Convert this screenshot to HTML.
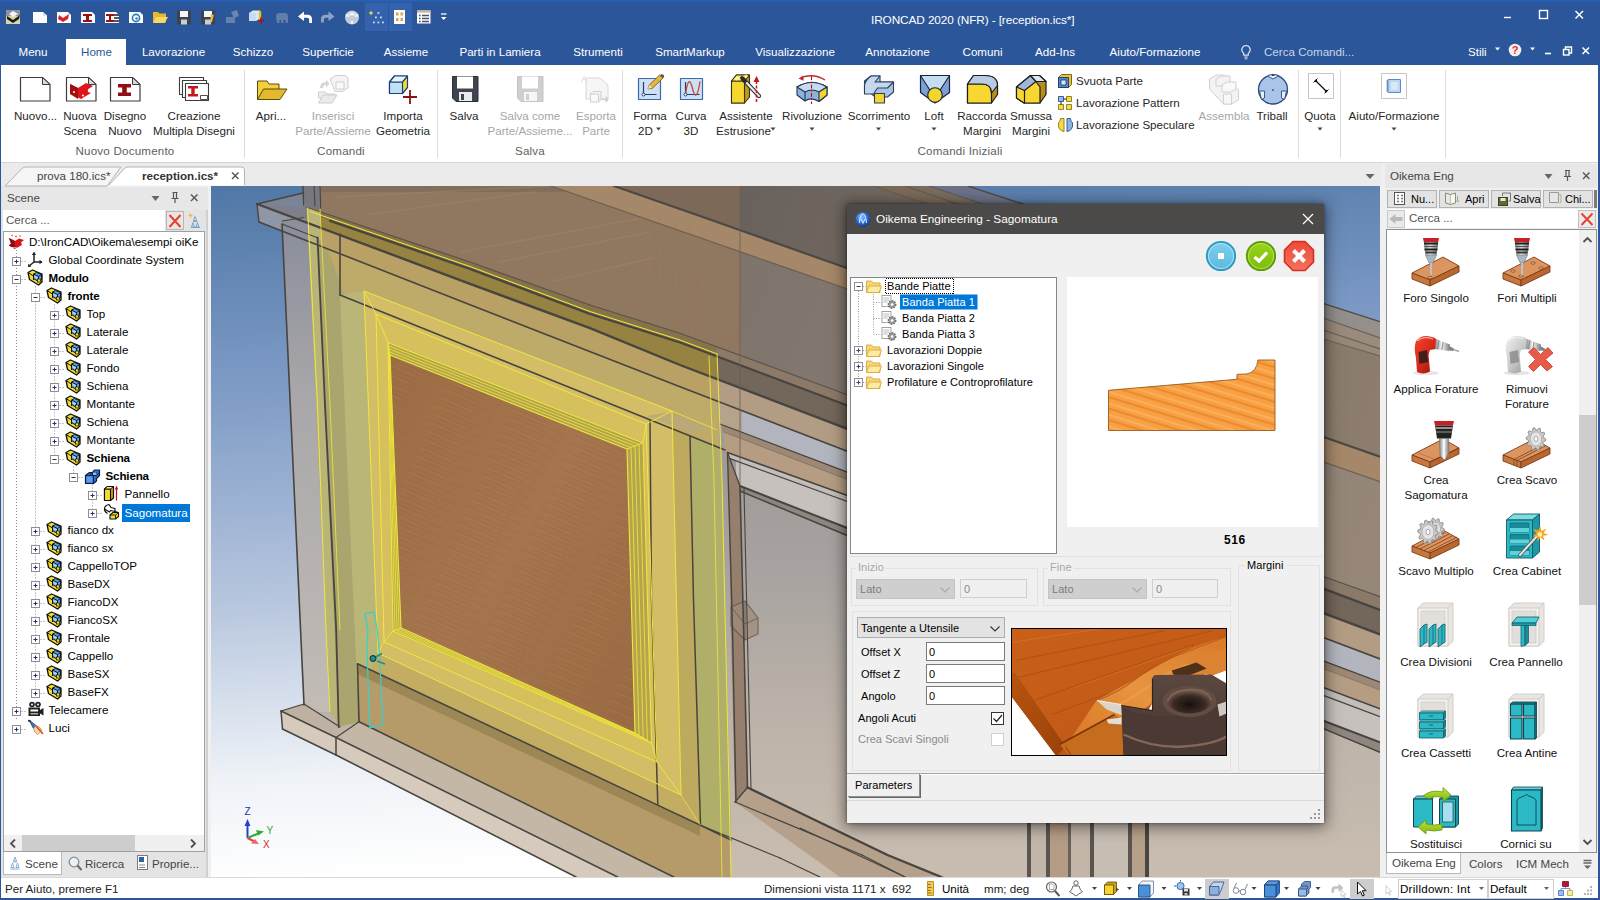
<!DOCTYPE html>
<html lang="it"><head><meta charset="utf-8"><title>IRONCAD 2020 (NFR) - [reception.ics*]</title>
<style>
*{box-sizing:border-box;margin:0;padding:0}
html,body{width:1600px;height:900px;overflow:hidden;background:#f0f0f0}
body{font-family:"Liberation Sans",sans-serif;font-size:11.6px;color:#1e1e1e;position:relative;-webkit-font-smoothing:antialiased}
.abs{position:absolute}
.t{position:absolute;white-space:nowrap;line-height:14px}
svg{position:absolute;overflow:visible}
#title{position:absolute;left:0;top:0;width:1600px;height:66px;background:#2b579a}
#ribbon{position:absolute;left:1px;top:66px;width:1598px;height:97px;background:#fff;border-bottom:1px solid #d6d6d6}
.rl{position:absolute;white-space:nowrap;text-align:center;font-size:11.6px;line-height:15px;color:#262626;transform:translateX(-50%)}
.rl.dis{color:#a6a6a6}
.grp{position:absolute;top:144px;white-space:nowrap;font-size:11.6px;letter-spacing:.2px;color:#5e5e5e;transform:translateX(-50%);line-height:14px}
.sep{position:absolute;top:70px;width:1px;height:88px;background:#dcdcdc}
.tab{position:absolute;top:44px;white-space:nowrap;color:#fff;font-size:11.6px;line-height:16px;transform:translateX(-50%)}
</style></head><body>
<div id="title"><div class="abs" style="left:0;top:0;width:1600px;height:2px;background:#2760b2"></div>
<!-- quick access toolbar -->
<svg width="460" height="36" viewBox="0 0 460 36" style="left:0;top:0">
 <!-- app icon -->
 <rect x="6" y="10" width="14" height="14" fill="#d9d6a8"/><rect x="6" y="10" width="14" height="6" fill="#8a93a0"/><path d="M7 16l6 4 7-5-1 4-6 4-6-4z" fill="#1a1a1a"/><path d="M9 14l4-3 5 3-5 3z" fill="#f4f4f4"/>
 <!-- new -->
 <path d="M33 12h10l4 3.500v7.500h-14z" fill="#fdfdfd"/><path d="M43 12v3.500h4z" fill="#cfd6e2"/>
 <!-- scene -->
 <path d="M57 12h11l3 3v8h-14z" fill="#fdfdfd"/><path d="M59 15l4 3 6-4-1 5-5 3-5-3z" fill="#d8232a"/>
 <!-- drawing -->
 <path d="M81 12h11l3 3v8h-14z" fill="#fdfdfd"/><path d="M83 14h9v2h-3v4h3v2h-9v-2h3v-4h-3z" fill="#9b1116"/>
 <!-- multi drawing -->
 <path d="M105 12h11l3 3v8h-14z" fill="#fdfdfd"/><path d="M106 14h8v2h-3v4h3v2h-8v-2h3v-4h-3z" fill="#9b1116"/><path d="M114 15h5M114 18h5M114 21h5" stroke="#222" stroke-width="1.300"/>
 <!-- 3d pdf-ish -->
 <path d="M129 12h11l3 3v8h-14z" fill="#fdfdfd"/><circle cx="136" cy="18" r="3.600" fill="none" stroke="#1e7fc0" stroke-width="1.600"/><circle cx="136.500" cy="18.500" r="1.200" fill="#1e7fc0"/>
 <!-- open -->
 <path d="M153 12h5l1.500 1.500h6.500v9h-13z" fill="#e9b82c"/><path d="M153 23l3-6h12l-3.500 6z" fill="#f8d765"/>
 <!-- save -->
 <rect x="177" y="10.500" width="14" height="14" rx="1" fill="#3d4450"/><rect x="180" y="11" width="8" height="6" fill="#f4f6f8"/><rect x="181" y="19.500" width="6" height="5" fill="#c9ced6"/>
 <!-- save as -->
 <rect x="201" y="10.500" width="14" height="14" rx="1" fill="#3d4450"/><rect x="204" y="11" width="8" height="6" fill="#f4f6f8"/><rect x="205" y="19.500" width="6" height="5" fill="#c9ced6"/><path d="M211 14l3 1-2 7-2 1z" fill="#e8b84a"/>
 <!-- dim icon -->
 <g opacity=".45"><rect x="226" y="17" width="9" height="6" fill="#aab4c6"/><path d="M231 12l6-2 2 6-5 2z" fill="#b8c2d4"/></g>
 <!-- cube + plus -->
 <path d="M249 13l4-2.500h7v8l-4 2.500h-7z" fill="#dbe9f7"/><path d="M249 13h7v8h-7z" fill="#c5dcf2"/><path d="M260 11v9" stroke="#e2c12a" stroke-width="2.400"/><path d="M258 20.500h6M261 17.500v6" stroke="#b00d18" stroke-width="1.600"/>
 <!-- elephant -->
 <g opacity=".5"><path d="M276 16q0-3 4-3h5q3 0 3 4v6h-2.500v-3h-2v3h-2.500v-3h-1.500v3h-2.500z" fill="#9aa6bd"/></g>
 <!-- undo -->
 <path d="M298 16.500l6-5v3.200h3.500q4.500 0 4.500 4.500v3.800h-2.800v-3.300q0-2-2-2h-3.200v3.300z" fill="#fff"/>
 <!-- redo -->
 <path d="M334.500 16.500l-6-5v3.200h-3q-4.500 0-4.500 4.500v3.300h2.800v-2.800q0-2 2-2h2.700v3.300z" fill="#8fa2c6"/>
 <!-- triball -->
 <circle cx="352" cy="17.500" r="7" fill="#c3cbdb"/><path d="M346 15l3 1M358 15l-3 1M352 24v-3" stroke="#eef1f6" stroke-width="2.400"/><rect x="349.500" y="12.500" width="5" height="3" fill="#eef1f6"/>
 <!-- highlighted -->
 <rect x="365" y="3" width="23" height="28" fill="#3562ad"/><rect x="389" y="3" width="23" height="28" fill="#3562ad"/>
 <path d="M371 10.500l.8 1.700 1.700.8-1.700.8-.8 1.700-.8-1.700-1.700-.8 1.700-.8z" fill="#f3e24a"/>
 <g fill="#bfe0f6"><rect x="377.500" y="12" width="1.800" height="1.800"/><rect x="375" y="16.500" width="1.800" height="1.800"/><rect x="380" y="16.500" width="1.800" height="1.800"/><rect x="373" y="21.500" width="1.800" height="1.800"/><rect x="377.500" y="21.500" width="1.800" height="1.800"/><rect x="382" y="21.500" width="1.800" height="1.800"/></g>
 <rect x="394" y="10" width="11" height="14" fill="#fdfbf4"/><g fill="#d6a066"><rect x="396" y="12.500" width="2.500" height="3"/><rect x="400.500" y="12.500" width="2.500" height="3"/><rect x="396" y="18" width="2.500" height="3"/><rect x="400.500" y="18" width="2.500" height="3"/></g>
 <!-- list -->
 <rect x="417" y="10.500" width="13.500" height="13" fill="#fdfdfd"/><rect x="417" y="10.500" width="13.500" height="2.200" fill="#c8b9a0"/><path d="M422 15.500h7M422 18.500h7M422 21.500h7" stroke="#4a5568" stroke-width="1.300"/><path d="M419 15.500h1.600M419 18.500h1.600M419 21.500h1.600" stroke="#4a5568" stroke-width="1.500"/>
 <!-- dropdown -->
 <path d="M441 14h5.500" stroke="#fff" stroke-width="1.300"/><path d="M441 17h5.500l-2.750 3z" fill="#fff"/>
</svg>
<div class="t" style="left:871px;top:12.500px;color:#fff;font-size:11.800px;letter-spacing:-.1px;line-height:15px">IRONCAD 2020 (NFR) - [reception.ics*]</div>
<!-- window buttons -->
<svg width="120" height="36" viewBox="0 0 120 36" style="left:1480px;top:0"><path d="M24 17.500h7" stroke="#fff" stroke-width="1.400"/><rect x="59.500" y="10.500" width="8" height="8" fill="none" stroke="#fff" stroke-width="1.400"/><path d="M95.500 11l7.500 7.500M103 11l-7.500 7.500" stroke="#fff" stroke-width="1.500"/></svg>
<!-- tabs -->
<div class="abs" style="left:66px;top:39px;width:60px;height:27px;background:#fff"></div>
<div class="tab" style="left:33px">Menu</div>
<div class="tab" style="left:96.500px;color:#2b579a">Home</div>
<div class="tab" style="left:173.500px">Lavorazione</div>
<div class="tab" style="left:253px">Schizzo</div>
<div class="tab" style="left:328px">Superficie</div>
<div class="tab" style="left:406px">Assieme</div>
<div class="tab" style="left:500px">Parti in Lamiera</div>
<div class="tab" style="left:598px">Strumenti</div>
<div class="tab" style="left:690px">SmartMarkup</div>
<div class="tab" style="left:795px">Visualizzazione</div>
<div class="tab" style="left:897.500px">Annotazione</div>
<div class="tab" style="left:982.500px">Comuni</div>
<div class="tab" style="left:1055px">Add-Ins</div>
<div class="tab" style="left:1155px">Aiuto/Formazione</div>
<svg width="16" height="18" viewBox="0 0 16 18" style="left:1238px;top:43px"><path d="M8 2.500a4.200 4.200 0 0 0-2.300 7.700v2h4.600v-2A4.200 4.200 0 0 0 8 2.500z" fill="none" stroke="#d7dfee" stroke-width="1.200"/><path d="M6.200 14h3.600M6.700 15.800h2.600" stroke="#d7dfee" stroke-width="1.100"/></svg>
<div class="tab" style="left:1264px;transform:none;color:#c9d5ea">Cerca Comandi...</div>
<div class="tab" style="left:1468px;transform:none">Stili</div>
<svg width="120" height="24" viewBox="0 0 120 24" style="left:1480px;top:39px">
 <path d="M15 8.500h5l-2.500 3z" fill="#fff"/>
 <circle cx="35" cy="11" r="6.300" fill="#f6eeee"/><text x="35" y="15" text-anchor="middle" font-family="Liberation Sans" font-weight="bold" font-size="11" fill="#d8342a">?</text>
 <path d="M50 8.500h5l-2.500 3z" fill="#fff"/>
 <path d="M65 14.500h6" stroke="#fff" stroke-width="1.600"/>
 <rect x="83.500" y="10.500" width="5.500" height="5.500" fill="none" stroke="#fff" stroke-width="1.400"/><path d="M85.500 10.500v-2.500h6v6h-2.500" fill="none" stroke="#fff" stroke-width="1.400"/>
 <path d="M102.500 8.500l6.500 6.500M109 8.500l-6.500 6.500" stroke="#fff" stroke-width="1.600"/>
</svg>
</div>
<div id="ribbon" style="top:65px;height:98px"></div>
<div class="abs" style="left:0;top:65px;width:1px;height:835px;background:#2b579a"></div>
<div class="abs" style="left:1598px;top:65px;width:2px;height:835px;background:#2b579a"></div>
<div class="abs" style="left:0;top:898px;width:1600px;height:2px;background:#2b579a"></div>
<svg width="1600" height="98" viewBox="0 65 1600 98" style="left:0;top:65px" stroke-linejoin="round">
 <!-- Nuovo -->
 <path d="M20.500 77.500h22l7.500 7v16.500h-29.500z" fill="#fff" stroke="#3c3c3c" stroke-width="1.200"/><path d="M42.500 77.500v7h7.500z" fill="#d9d9d9" stroke="#3c3c3c" stroke-width="1"/>
 <!-- Nuova Scena -->
 <path d="M66.500 77.500h22l7.500 7v16.500h-29.500z" fill="#fff" stroke="#3c3c3c" stroke-width="1.200"/><path d="M88.500 77.500v7h7.500z" fill="#d9d9d9" stroke="#3c3c3c" stroke-width="1"/>
 <path d="M70 84l8 4 8-5 7 3-3 2q-3 1-2 4l3 1-10 6-10-5z" fill="#e0151b"/><path d="M70 84l8 4v11l-8-5z" fill="#a50d12"/><circle cx="80" cy="84.500" r="1" fill="#fff"/><circle cx="74" cy="92" r="1" fill="#fff"/><circle cx="83" cy="95.500" r="1" fill="#fff"/>
 <!-- Disegno Nuovo -->
 <path d="M110.500 77.500h22l7.500 7v16.500h-29.500z" fill="#fff" stroke="#3c3c3c" stroke-width="1.200"/><path d="M132.500 77.500v7h7.500z" fill="#d9d9d9" stroke="#3c3c3c" stroke-width="1"/>
 <path d="M118 84h13v3.500h-4.200v5h4.200v3.500h-13v-3.500h4.200v-5h-4.200z" fill="#8e0f14"/>
 <!-- Creazione multipla -->
 <rect x="179.500" y="77.500" width="24" height="17" fill="#fff" stroke="#3c3c3c" stroke-width="1.100"/><rect x="182.500" y="80.500" width="24" height="17" fill="#fff" stroke="#3c3c3c" stroke-width="1.100"/><rect x="185.500" y="83.500" width="23" height="17" fill="#fff" stroke="#3c3c3c" stroke-width="1.100"/>
 <path d="M188 86h10v2.500h-3.300v5.500h3.300v2.500h-10v-2.500h3.300v-5.500h-3.300z" fill="#c01a20"/><rect x="200.500" y="95.500" width="7" height="4" fill="#fff" stroke="#3c3c3c" stroke-width=".9"/>
 <!-- Apri -->
 <path d="M257.500 81h9.500l2 3h10v15.500h-21.500z" fill="#f3cf3e" stroke="#5a4a12" stroke-width="1"/><path d="M257.500 99.500l6-10.500h23.500l-7 10.500z" fill="#e2b92a" stroke="#5a4a12" stroke-width="1"/><path d="M257.500 84v15.500" stroke="#5a4a12" stroke-width="1"/>
 <!-- Inserisci (disabled) -->
 <g opacity=".55"><path d="M318.500 92h7l1.500 2h8v4h-16.500z" fill="#e0e0e0" stroke="#a8a8a8"/><path d="M318.500 103l4.500-8h14l-5 8z" fill="#dadada" stroke="#a8a8a8"/><path d="M330 79l6-3.500h9l3 2.500v10l-6 3.500h-7z" fill="#ececec" stroke="#a8a8a8"/><path d="M336 82h8v7h-8z" fill="#f5f5f5" stroke="#a8a8a8"/><path d="M320 88q0-6 6-6v-2.500l3.500 4-3.500 4v-2.500q-3 0-3 3z" fill="#b5b5b5"/></g>
 <!-- Importa Geometria -->
 <path d="M389.500 82l5-6h13v11.500l-5 6h-13z" fill="#f4d93a" stroke="#1c3f74" stroke-width="1.200"/><path d="M389.500 82h13v11.500h-13z" fill="#bfe1f7" stroke="#1c3f74" stroke-width="1.200"/><path d="M389.500 82l5-6h13l-5 6z" fill="#e6f3fc" stroke="#1c3f74" stroke-width="1.200"/>
 <path d="M403 97h14M410 90v14" stroke="#8b0f16" stroke-width="1.800"/>
 <!-- Salva -->
 <path d="M452.500 76.500h25.500v25h-22l-3.500-3.500z" fill="#3f4550" stroke="#2a2e36"/><rect x="457" y="76.500" width="16" height="12" fill="#fff"/><rect x="459" y="92" width="13" height="9" fill="#e9ebf0"/><rect x="461" y="94" width="3" height="6" fill="#3f4550"/>
 <!-- Salva come (disabled) -->
 <g opacity=".5"><path d="M517.500 76.500h25.500v25h-22l-3.500-3.500z" fill="#a0a0a0" stroke="#8a8a8a"/><rect x="522" y="76.500" width="16" height="12" fill="#fff"/><rect x="524" y="92" width="13" height="9" fill="#efefef"/><rect x="526" y="94" width="3" height="6" fill="#a0a0a0"/></g>
 <!-- Esporta (disabled) -->
 <g opacity=".55"><path d="M586 78h14l8 7v14h-22z" fill="#efefef" stroke="#b9b9b9"/><rect x="590.500" y="94" width="8" height="8" fill="#f6f6f6" stroke="#a9a9a9"/><path d="M590.500 94l2.500-2.500h8v8l-2.500 2.500" fill="none" stroke="#a9a9a9"/><path d="M602 99.500h6m-2.500-2.500l2.500 2.500-2.500 2.500" stroke="#a9a9a9" stroke-width="1.400" fill="none"/><text x="581" y="82" font-family="Liberation Sans" font-size="9" fill="#b0b0b0">A</text></g>
 <!-- Forma 2D -->
 <rect x="638.500" y="78.500" width="22" height="21" fill="#cfe0f3" stroke="#3a6bb0" stroke-width="1.200"/><path d="M643.500 82v12.500h13" fill="none" stroke="#1d3f7a" stroke-width="1.200"/><circle cx="643.500" cy="94.500" r="1.500" fill="#fff" stroke="#1d3f7a"/><path d="M648 89l1.200-4 10.500-10 3.200 3.200-10.500 10z" fill="#e9b43a" stroke="#6b5220" stroke-width=".8"/><path d="M648 89l1.200-4 2.800 2.800z" fill="#f3e4c7"/><path d="M659.700 75l3.200 3.200 1-1q.8-1-.3-2.200t-2.400-.6z" fill="#6d4d3a"/>
 <!-- Curva 3D -->
 <rect x="680.500" y="78.500" width="22" height="21" fill="#cfe0f3" stroke="#3a6bb0" stroke-width="1.200"/><path d="M685.500 82v12.500h14" fill="none" stroke="#1d3f7a" stroke-width="1.200"/><path d="M685.500 94.500q3-22 7-6t7.500-7" fill="none" stroke="#c24a3c" stroke-width="1.300"/><circle cx="685.500" cy="94.500" r="1.500" fill="#fff" stroke="#1d3f7a"/>
 <!-- Assistente Estrusione -->
 <path d="M731.500 81l5-6h13v22l-5 6h-13z" fill="#b99a1e" stroke="#3b3210" stroke-width="1.100"/><path d="M731.500 81h13v22h-13z" fill="#f6d72f" stroke="#3b3210" stroke-width="1.100"/><path d="M731.500 81l5-6h13l-5 6z" fill="#fbea7a" stroke="#3b3210" stroke-width="1.100"/>
 <path d="M743 79l16 17" stroke="#2a2a2a" stroke-width="4.200" stroke-linecap="round"/><path d="M743 79l16 17" stroke="#ececec" stroke-width="2.200" stroke-linecap="round"/><path d="M742 78l3 3.200" stroke="#2a2a2a" stroke-width="3.800" stroke-linecap="round"/>
 <path d="M756.500 102v-22" stroke="#c8141c" stroke-width="1.500" stroke-dasharray="3 1.500"/><path d="M753.500 82l3-6 3 6z" fill="#c8141c"/>
 <path d="M737 76.500v4M735 78.500h4M746 74.500v3M744.500 76h3" stroke="#fff7b0" stroke-width="1"/>
 <!-- Rivoluzione -->
 <path d="M797 87q15-9 30 0v8l-8 6.500q-8-5-14-.5l-8-6z" fill="#8fb0d8" stroke="#1f3558" stroke-width="1.100"/><path d="M797 87q15-9 30 0l-8 5q-7-4-14 0z" fill="#c9dbef" stroke="#1f3558" stroke-width="1.100"/><path d="M819 92l8-5v8l-8 6.500z" fill="#f4d52e" stroke="#1f3558" stroke-width="1.100"/><path d="M805 92v9" stroke="#1f3558" stroke-width="1.100"/>
 <path d="M811.500 76v28" stroke="#b3141b" stroke-width="1.100" stroke-dasharray="4 1.500 1.500 1.500"/><path d="M825 80q-11-7-24-2.500" fill="none" stroke="#c0272d" stroke-width="1.300"/><path d="M798.500 78.500l5-3v5.200z" fill="#c0272d"/>
 <!-- Scorrimento -->
 <path d="M871 76h9v6h13.500v10l-6 5h-12l-4-3v-4h-7v-9z" fill="#a9c3e4" stroke="#2d3e5c" stroke-width="1.100"/><path d="M864.500 86q0-5 6.500-10h9l-5 6h18.500l-6 6h-10l-4 6h-9z" fill="#c6d8ee" stroke="#2d3e5c" stroke-width="1.100"/><rect x="874.500" y="93.500" width="10" height="9.500" fill="#f4d52e" stroke="#2d3e5c" stroke-width="1.100"/>
 <!-- Loft -->
 <path d="M920.500 75.500h29v17l-14.500 10.500-14.500-10.500z" fill="#7f9fd0" stroke="#15233f" stroke-width="1.200"/><path d="M920.500 75.500h29l-9 14h-11z" fill="#c6dcf2" stroke="#15233f" stroke-width="1.100"/><circle cx="935" cy="95" r="7.300" fill="#f4d52e" stroke="#15233f" stroke-width="1.100"/>
 <!-- Raccorda -->
 <path d="M967.500 84l6-8.500h11q13 0 13 10v9l-6 8.500h-24z" fill="#b58f18" stroke="#1d1d1d" stroke-width="1.200"/><path d="M967.500 84h14q10 0 10 9v10h-24z" fill="#f7d730" stroke="#1d1d1d" stroke-width="1.200"/><path d="M967.500 84l6-8.500h11q13 0 13 10l-6 7.500q0-9-10-9z" fill="#b9cce6" stroke="#1d1d1d" stroke-width="1.200"/>
 <!-- Smussa -->
 <path d="M1016.500 87l14-11.500h9l6.500 6v13l-6 8.500h-16l-7.500-5z" fill="#b58f18" stroke="#1d1d1d" stroke-width="1.200"/><path d="M1016.500 87l8-2 9-6.500 6.500 8.500v16h-16l-7.500-5z" fill="#f7d730" stroke="#1d1d1d" stroke-width="1.200"/><path d="M1016.500 87l14-11.500 5.500 6-11.500 9z" fill="#9fb6d6" stroke="#1d1d1d" stroke-width="1.200"/><path d="M1030.500 75.500h9l6.500 6h-10z" fill="#dbe6f4" stroke="#1d1d1d" stroke-width="1.200"/><path d="M1024.500 90.500v13" stroke="#1d1d1d" stroke-width="1.200"/>
 <!-- small icons -->
 <path d="M1058.500 77.500l3-3h10v10l-3 3h-10z" fill="#e8c631" stroke="#6b5a14" stroke-width=".9"/><rect x="1058.500" y="77.500" width="10" height="10" fill="#4f86c9" stroke="#1e3c6e" stroke-width=".9"/><rect x="1061" y="80" width="5" height="5" fill="#d7e7f7" stroke="#1e3c6e" stroke-width=".8"/>
 <rect x="1058.500" y="96.500" width="5" height="5" fill="#9cbce4" stroke="#27508c" stroke-width=".9"/><rect x="1066.500" y="96.500" width="5" height="5" fill="#f6dc45" stroke="#8d7413" stroke-width=".9"/><rect x="1058.500" y="104.500" width="5" height="5" fill="#f6dc45" stroke="#8d7413" stroke-width=".9"/><rect x="1066.500" y="104.500" width="5" height="5" fill="#f6dc45" stroke="#8d7413" stroke-width=".9"/><path d="M1061 101.500v3M1063.500 99h3" stroke="#222" stroke-width="1"/>
 <path d="M1064 118.500v13q-5-1-5.500-5.500l0-3.500q2-.5 2-4z" fill="#f6dc45" stroke="#8d7413" stroke-width=".9"/><path d="M1067 118.500v13q5-1 5.500-5.500l0-3.500q-2-.5-2-4z" fill="#8fb3e2" stroke="#27508c" stroke-width=".9"/>
 <!-- Assembla (disabled) -->
 <g opacity=".6" fill="#ececec" stroke="#b4b4b4" stroke-width="1"><path d="M1209.500 79l7-4h8l14 15v10l-7 4h-8l-14-15z"/><path d="M1223.500 94h8v10h-8z" fill="#f4f4f4"/><path d="M1216 79l5-3h9v7l-5 3h-9z"/><path d="M1222 85l5-3h9v7l-5 3h-9z" fill="#f6f6f6"/></g>
 <!-- Triball -->
 <circle cx="1273" cy="89.500" r="14.500" fill="#a9c4e8" stroke="#2a4c7e" stroke-width="1.300"/><path d="M1268.500 76.500l4.500 2.500 4.500-2.500v-1.500h-9z" fill="#e8f0fa" stroke="#2a4c7e" stroke-width=".9"/><path d="M1259.500 91h5v7l-3 1.500z" fill="#e8f0fa" stroke="#2a4c7e" stroke-width=".9"/><path d="M1286.500 91h-5v7l3 1.500z" fill="#e8f0fa" stroke="#2a4c7e" stroke-width=".9"/><circle cx="1273" cy="90" r=".9" fill="#2a4c7e"/><circle cx="1273" cy="75" r="1" fill="#1d2d44"/>
 <!-- Quota -->
 <rect x="1308.500" y="73.500" width="25" height="25" fill="#fff" stroke="#c6c6c6"/><path d="M1315 80l12 12" stroke="#111" stroke-width="1.200"/><path d="M1313.500 82.500l4-4M1324.500 93.500l4-4" stroke="#111" stroke-width="1"/><circle cx="1316" cy="81" r="1.200" fill="#111"/><circle cx="1326" cy="91" r="1.200" fill="#111"/>
 <!-- Aiuto -->
 <rect x="1381.500" y="73.500" width="25" height="25" fill="#fff" stroke="#c6c6c6"/><rect x="1388" y="79.500" width="12.500" height="13" fill="#bcd6f2" stroke="#5b8cc8" stroke-width="1"/><rect x="1391" y="82" width="7" height="8" fill="#d9e8f8"/><path d="M1388 81h-1.500M1388 83h-1.500M1388 85h-1.500M1388 87h-1.500M1388 89h-1.500M1388 91h-1.500" stroke="#2c5b9c" stroke-width="1"/>
 <!-- arrows -->
 <g fill="#444"><path d="M656 127.500h5l-2.500 3z"/><path d="M770.500 127.500h5l-2.500 3z"/><path d="M809.500 127.500h5l-2.500 3z"/><path d="M876 127.500h5l-2.500 3z"/><path d="M931.500 127.500h5l-2.500 3z"/><path d="M1317.500 127.500h5l-2.500 3z"/><path d="M1391.500 127.500h5l-2.500 3z"/></g>
</svg>
<div class="sep" style="left:244px"></div><div class="sep" style="left:437px"></div><div class="sep" style="left:622px"></div><div class="sep" style="left:1298px"></div><div class="sep" style="left:1340px"></div><div class="sep" style="left:1445px"></div>
<div class="rl" style="left:35.500px;top:108px">Nuovo...</div>
<div class="rl" style="left:80px;top:108px">Nuova<br>Scena</div>
<div class="rl" style="left:125px;top:108px">Disegno<br>Nuovo</div>
<div class="rl" style="left:194px;top:108px">Creazione<br>Multipla Disegni</div>
<div class="rl" style="left:271px;top:108px">Apri...</div>
<div class="rl dis" style="left:333px;top:108px">Inserisci<br>Parte/Assieme</div>
<div class="rl" style="left:403px;top:108px">Importa<br>Geometria</div>
<div class="rl" style="left:464px;top:108px">Salva</div>
<div class="rl dis" style="left:530px;top:108px">Salva come<br>Parte/Assieme...</div>
<div class="rl dis" style="left:596px;top:108px">Esporta<br>Parte</div>
<div class="rl" style="left:650px;top:108px">Forma<br><span style="margin-right:9px">2D</span></div>
<div class="rl" style="left:691px;top:108px">Curva<br>3D</div>
<div class="rl" style="left:746px;top:108px">Assistente<br><span style="margin-right:5px">Estrusione</span></div>
<div class="rl" style="left:812px;top:108px">Rivoluzione</div>
<div class="rl" style="left:879px;top:108px">Scorrimento</div>
<div class="rl" style="left:934px;top:108px">Loft</div>
<div class="rl" style="left:982px;top:108px">Raccorda<br>Margini</div>
<div class="rl" style="left:1031px;top:108px">Smussa<br>Margini</div>
<div class="rl" style="left:1076px;top:73px;transform:none">Svuota Parte</div>
<div class="rl" style="left:1076px;top:95px;transform:none">Lavorazione Pattern</div>
<div class="rl" style="left:1076px;top:117px;transform:none">Lavorazione Speculare</div>
<div class="rl dis" style="left:1224px;top:108px">Assembla</div>
<div class="rl" style="left:1272px;top:108px">Triball</div>
<div class="rl" style="left:1320px;top:108px">Quota</div>
<div class="rl" style="left:1394px;top:108px">Aiuto/Formazione</div>
<div class="grp" style="left:125px">Nuovo Documento</div>
<div class="grp" style="left:341px">Comandi</div>
<div class="grp" style="left:530px">Salva</div>
<div class="grp" style="left:960px">Comandi Iniziali</div>
<div id="left">
<style>
#left .hd{position:absolute;left:3px;top:187px;width:205px;height:23px;background:#e7e7e7}
#left .tr{position:absolute;left:3px;top:231px;width:202px;height:621px;background:#fff;border:1px solid #a0a0a0;overflow:hidden}
#left .r{position:absolute;white-space:nowrap;line-height:16px;height:16px;font-size:11.600px;color:#000}
#left .b{font-weight:bold;letter-spacing:-.15px}
</style>
<div class="abs" style="left:1px;top:186px;width:210px;height:691px;background:#e4e4e4"></div>
<div class="abs" style="left:206px;top:186px;width:2px;height:691px;background:#d0d0d0"></div>
<div class="abs" style="left:208px;top:186px;width:4px;height:691px;background:#f0f0f0"></div>
<div class="hd"></div>
<div class="t" style="left:7px;top:190px;font-size:11.600px;color:#444;line-height:16px">Scene</div>
<svg width="60" height="20" viewBox="0 0 60 20" style="left:145px;top:188px"><path d="M6.500 8h8l-4 5z" fill="#666"/><path d="M27.500 4.500h5M28.500 4.500v6M31.500 4.500v6M26.500 10.500h7M30 10.500v4.500" stroke="#555" stroke-width="1.200" fill="none"/><path d="M46 6.500l6.500 6.500M52.500 6.500l-6.500 6.500" stroke="#555" stroke-width="1.400"/></svg>
<div class="abs" style="left:3px;top:210px;width:162px;height:21px;background:#fff"></div>
<div class="t" style="left:6px;top:212px;font-size:11.600px;color:#555;line-height:16px">Cerca ...</div>
<div class="abs" style="left:166px;top:211px;width:18px;height:19px;background:#e6e6e6;border:1px solid #b5b5b5"></div>
<svg width="40" height="20" viewBox="0 0 40 20" style="left:166px;top:211px"><path d="M3.500 4l11 12M14.500 4l-11 12" stroke="#e8402c" stroke-width="2"/><path d="M24.500 2l.8 1.800 1.800.7-1.800.7-.8 1.800-.8-1.800-1.800-.7 1.800-.7z" fill="#efb73e"/><g fill="none" stroke="#6aa0c8" stroke-width=".9"><path d="M29 5.500l1.500 4h-3zM27 11.500l1.500 4.500h-3zM31.500 11.500l1.500 4.500h-3z"/><path d="M27 10.500h4.500M25 16.500h9"/></g></svg>
<div class="tr">
<svg width="202" height="621" viewBox="3 231 202 621" style="left:-1px;top:-1px">
<defs>
<symbol id="asm" viewBox="0 0 17 17" overflow="visible"><path d="M1 3.500l4.500-2.500 9.500 4v8l-3.500 3-9-5.500z" fill="#f4dc2a" stroke="#111" stroke-width="1.300" stroke-linejoin="round"/><path d="M1 3.500l5.500 3.500v4" fill="none" stroke="#111" stroke-width="1"/><path d="M6.500 5l3-1.500 5 2v5l-3 2-5-3z" fill="#5ba2e8" stroke="#111" stroke-width="1" stroke-linejoin="round"/><path d="M6.500 5l5 2.500 3-2" fill="none" stroke="#111" stroke-width=".9"/><path d="M11.500 7.500v5" stroke="#111" stroke-width=".9"/><path d="M7.500 6.500l3.500 1.800v2.500l-3.500-2z" fill="#a8d2f6"/><rect x="10.500" y="10" width="3" height="3" fill="#f4dc2a" stroke="#111" stroke-width=".7"/></symbol>
<symbol id="part" viewBox="0 0 17 17" overflow="visible"><path d="M1.500 8.500l4-3h3l2-2.500h5v5.500l-3 3v2.500l-3 2.500h-8z" fill="#2f6fc6" stroke="#0c1e40" stroke-width="1.200" stroke-linejoin="round"/><path d="M1.500 8.500h8v8M9.500 8.500l3-3M7.500 5.500l-1 3M10.500 3l-2 2.500v3h4l3-3" fill="none" stroke="#0c1e40" stroke-width=".9"/><path d="M2.500 9.500h6v6h-6z" fill="#5f9be6"/><path d="M9 5.800h3v2.200h-3z" fill="#8fbdf0"/></symbol>
<symbol id="ext" viewBox="0 0 17 17" overflow="visible"><path d="M1.500 4l3-2.500h6v11.500l-3 2.500h-6z" fill="#c9a019" stroke="#111" stroke-width="1.200" stroke-linejoin="round"/><path d="M1.500 4h6v11.500h-6z" fill="#f7dc2c" stroke="#111" stroke-width="1.100"/><path d="M1.500 4l3-2.500h6l-3 2.500z" fill="#fbf0a0" stroke="#111" stroke-width="1"/><path d="M13.500 15.500v-12" stroke="#b3141b" stroke-width="1.200"/><path d="M11.700 4.500l1.800-4 1.800 4z" fill="#d2141b"/></symbol>
<symbol id="sweep" viewBox="0 0 17 17" overflow="visible"><path d="M6 1.500q-4.500 1-4.500 4.500l5 3 1-1.500 4.500 1v-3l-4-1z" fill="#fff" stroke="#111" stroke-width="1.200" stroke-linejoin="round"/><path d="M1.500 6q0 3 3 4.500" fill="none" stroke="#111" stroke-width="1.200"/><path d="M7 12l3-2.500h5.500v4l-3 2.500h-5.500z" fill="#f4dc2a" stroke="#111" stroke-width="1.100" stroke-linejoin="round"/><path d="M7 12h5.500v4M12.500 12l3-2.500" fill="none" stroke="#111" stroke-width=".9"/><path d="M12 8.500l3.500 1" stroke="#111" stroke-width="1.100"/></symbol>
<symbol id="gcs" viewBox="0 0 17 17" overflow="visible"><path d="M7 1.500v9.500M7 11l-5.500 4.500M7 11h8" stroke="#222" stroke-width="1.500" fill="none"/><path d="M4.800 4l2.200-3 2.200 3zM12.500 8.800l3 2.200-3 2.200zM1 12.800l.2 3.200 3.300-.6z" fill="#222"/></symbol>
<symbol id="root" viewBox="0 0 17 17" overflow="visible"><path d="M1 5l6 3 4-2.500 5 1.500-3 2.500 1 2.500-7 4-6-3.500 2-2z" fill="#d8141b"/><path d="M1 5l6 3v8l-6-3.500 2-2z" fill="#8e0c11"/><circle cx="8" cy="3.500" r=".8" fill="#d8141b"/><circle cx="4" cy="2.500" r=".7" fill="#d8141b"/><circle cx="12" cy="3" r=".7" fill="#d8141b"/><path d="M3 14.500l6 .5" stroke="#fff" stroke-width=".8"/></symbol>
<symbol id="cam" viewBox="0 0 17 17" overflow="visible"><circle cx="5" cy="3.500" r="2.800" fill="#222"/><circle cx="11" cy="3.500" r="2.800" fill="#222"/><circle cx="5" cy="3.500" r="1" fill="#fff"/><circle cx="11" cy="3.500" r="1" fill="#fff"/><rect x="1.500" y="6.500" width="11.500" height="8.500" fill="#222"/><rect x="3.500" y="8.500" width="7.500" height="2" fill="#fff"/><rect x="3.500" y="12" width="7.500" height="1.500" fill="#aaa"/><path d="M13 9l3.500-2v7.500l-3.500-2z" fill="#222"/></symbol>
<symbol id="light" viewBox="0 0 17 17" overflow="visible"><path d="M2 1l7 5.500-2.500 3z" fill="#3d78c4" stroke="#1f3e72" stroke-width=".8"/><path d="M6.500 9.500l2.500-3q4 1 6 5l-4.500 4q-3.500-2-4-6z" fill="#f3d9b8" stroke="#c98a4a" stroke-width=".8"/><path d="M9 7l7 8" stroke="#e0592a" stroke-width="1.800"/><path d="M1 1.500l3 1" stroke="#2a2a2a" stroke-width="1.600"/></symbol>
</defs>
<g stroke="#8c8c8c" stroke-width="1" stroke-dasharray="1 2" fill="none">

<path d="M16.500 250v469"/>
<path d="M35.500 286.500v405"/>
<path d="M54.500 304.500v153"/>
<path d="M73.500 466.500v9"/>
<path d="M92.500 484.500v27"/>
<path d="M21.5 261.5h6"/>
<path d="M21.5 279.5h6"/>
<path d="M40.5 297.5h6"/>
<path d="M59.5 315.5h6"/>
<path d="M59.5 333.5h6"/>
<path d="M59.5 351.5h6"/>
<path d="M59.5 369.5h6"/>
<path d="M59.5 387.5h6"/>
<path d="M59.5 405.5h6"/>
<path d="M59.5 423.5h6"/>
<path d="M59.5 441.5h6"/>
<path d="M59.5 459.5h6"/>
<path d="M78.5 477.5h6"/>
<path d="M97.5 495.5h6"/>
<path d="M97.5 513.5h6"/>
<path d="M40.5 531.5h6"/>
<path d="M40.5 549.5h6"/>
<path d="M40.5 567.5h6"/>
<path d="M40.5 585.5h6"/>
<path d="M40.5 603.5h6"/>
<path d="M40.5 621.5h6"/>
<path d="M40.5 639.5h6"/>
<path d="M40.5 657.5h6"/>
<path d="M40.5 675.5h6"/>
<path d="M40.5 693.5h6"/>
<path d="M21.5 711.5h6"/>
<path d="M21.5 729.5h6"/>
</g>
<use href="#root" x="8" y="233.0" width="17" height="17"/>
<rect x="12.5" y="257.5" width="8" height="8" fill="#fff" stroke="#8f8f8f"/>
<path d="M14.5 261.5h4" stroke="#20306a" stroke-width="1"/>
<path d="M16.5 259.5v4" stroke="#20306a" stroke-width="1"/>
<use href="#gcs" x="27.0" y="251.0" width="17" height="17"/>
<rect x="12.5" y="275.5" width="8" height="8" fill="#fff" stroke="#8f8f8f"/>
<path d="M14.5 279.5h4" stroke="#20306a" stroke-width="1"/>
<use href="#asm" x="27.0" y="269.0" width="17" height="17"/>
<rect x="31.5" y="293.5" width="8" height="8" fill="#fff" stroke="#8f8f8f"/>
<path d="M33.5 297.5h4" stroke="#20306a" stroke-width="1"/>
<use href="#asm" x="46.0" y="287.0" width="17" height="17"/>
<rect x="50.5" y="311.5" width="8" height="8" fill="#fff" stroke="#8f8f8f"/>
<path d="M52.5 315.5h4" stroke="#20306a" stroke-width="1"/>
<path d="M54.5 313.5v4" stroke="#20306a" stroke-width="1"/>
<use href="#asm" x="65.0" y="305.0" width="17" height="17"/>
<rect x="50.5" y="329.5" width="8" height="8" fill="#fff" stroke="#8f8f8f"/>
<path d="M52.5 333.5h4" stroke="#20306a" stroke-width="1"/>
<path d="M54.5 331.5v4" stroke="#20306a" stroke-width="1"/>
<use href="#asm" x="65.0" y="323.0" width="17" height="17"/>
<rect x="50.5" y="347.5" width="8" height="8" fill="#fff" stroke="#8f8f8f"/>
<path d="M52.5 351.5h4" stroke="#20306a" stroke-width="1"/>
<path d="M54.5 349.5v4" stroke="#20306a" stroke-width="1"/>
<use href="#asm" x="65.0" y="341.0" width="17" height="17"/>
<rect x="50.5" y="365.5" width="8" height="8" fill="#fff" stroke="#8f8f8f"/>
<path d="M52.5 369.5h4" stroke="#20306a" stroke-width="1"/>
<path d="M54.5 367.5v4" stroke="#20306a" stroke-width="1"/>
<use href="#asm" x="65.0" y="359.0" width="17" height="17"/>
<rect x="50.5" y="383.5" width="8" height="8" fill="#fff" stroke="#8f8f8f"/>
<path d="M52.5 387.5h4" stroke="#20306a" stroke-width="1"/>
<path d="M54.5 385.5v4" stroke="#20306a" stroke-width="1"/>
<use href="#asm" x="65.0" y="377.0" width="17" height="17"/>
<rect x="50.5" y="401.5" width="8" height="8" fill="#fff" stroke="#8f8f8f"/>
<path d="M52.5 405.5h4" stroke="#20306a" stroke-width="1"/>
<path d="M54.5 403.5v4" stroke="#20306a" stroke-width="1"/>
<use href="#asm" x="65.0" y="395.0" width="17" height="17"/>
<rect x="50.5" y="419.5" width="8" height="8" fill="#fff" stroke="#8f8f8f"/>
<path d="M52.5 423.5h4" stroke="#20306a" stroke-width="1"/>
<path d="M54.5 421.5v4" stroke="#20306a" stroke-width="1"/>
<use href="#asm" x="65.0" y="413.0" width="17" height="17"/>
<rect x="50.5" y="437.5" width="8" height="8" fill="#fff" stroke="#8f8f8f"/>
<path d="M52.5 441.5h4" stroke="#20306a" stroke-width="1"/>
<path d="M54.5 439.5v4" stroke="#20306a" stroke-width="1"/>
<use href="#asm" x="65.0" y="431.0" width="17" height="17"/>
<rect x="50.5" y="455.5" width="8" height="8" fill="#fff" stroke="#8f8f8f"/>
<path d="M52.5 459.5h4" stroke="#20306a" stroke-width="1"/>
<use href="#asm" x="65.0" y="449.0" width="17" height="17"/>
<rect x="69.5" y="473.5" width="8" height="8" fill="#fff" stroke="#8f8f8f"/>
<path d="M71.5 477.5h4" stroke="#20306a" stroke-width="1"/>
<use href="#part" x="84.0" y="467.0" width="17" height="17"/>
<rect x="88.5" y="491.5" width="8" height="8" fill="#fff" stroke="#8f8f8f"/>
<path d="M90.5 495.5h4" stroke="#20306a" stroke-width="1"/>
<path d="M92.5 493.5v4" stroke="#20306a" stroke-width="1"/>
<use href="#ext" x="103.0" y="485.0" width="17" height="17"/>
<rect x="88.5" y="509.5" width="8" height="8" fill="#fff" stroke="#8f8f8f"/>
<path d="M90.5 513.5h4" stroke="#20306a" stroke-width="1"/>
<path d="M92.5 511.5v4" stroke="#20306a" stroke-width="1"/>
<use href="#sweep" x="103.0" y="503.0" width="17" height="17"/>
<rect x="31.5" y="527.5" width="8" height="8" fill="#fff" stroke="#8f8f8f"/>
<path d="M33.5 531.5h4" stroke="#20306a" stroke-width="1"/>
<path d="M35.5 529.5v4" stroke="#20306a" stroke-width="1"/>
<use href="#asm" x="46.0" y="521.0" width="17" height="17"/>
<rect x="31.5" y="545.5" width="8" height="8" fill="#fff" stroke="#8f8f8f"/>
<path d="M33.5 549.5h4" stroke="#20306a" stroke-width="1"/>
<path d="M35.5 547.5v4" stroke="#20306a" stroke-width="1"/>
<use href="#asm" x="46.0" y="539.0" width="17" height="17"/>
<rect x="31.5" y="563.5" width="8" height="8" fill="#fff" stroke="#8f8f8f"/>
<path d="M33.5 567.5h4" stroke="#20306a" stroke-width="1"/>
<path d="M35.5 565.5v4" stroke="#20306a" stroke-width="1"/>
<use href="#asm" x="46.0" y="557.0" width="17" height="17"/>
<rect x="31.5" y="581.5" width="8" height="8" fill="#fff" stroke="#8f8f8f"/>
<path d="M33.5 585.5h4" stroke="#20306a" stroke-width="1"/>
<path d="M35.5 583.5v4" stroke="#20306a" stroke-width="1"/>
<use href="#asm" x="46.0" y="575.0" width="17" height="17"/>
<rect x="31.5" y="599.5" width="8" height="8" fill="#fff" stroke="#8f8f8f"/>
<path d="M33.5 603.5h4" stroke="#20306a" stroke-width="1"/>
<path d="M35.5 601.5v4" stroke="#20306a" stroke-width="1"/>
<use href="#asm" x="46.0" y="593.0" width="17" height="17"/>
<rect x="31.5" y="617.5" width="8" height="8" fill="#fff" stroke="#8f8f8f"/>
<path d="M33.5 621.5h4" stroke="#20306a" stroke-width="1"/>
<path d="M35.5 619.5v4" stroke="#20306a" stroke-width="1"/>
<use href="#asm" x="46.0" y="611.0" width="17" height="17"/>
<rect x="31.5" y="635.5" width="8" height="8" fill="#fff" stroke="#8f8f8f"/>
<path d="M33.5 639.5h4" stroke="#20306a" stroke-width="1"/>
<path d="M35.5 637.5v4" stroke="#20306a" stroke-width="1"/>
<use href="#asm" x="46.0" y="629.0" width="17" height="17"/>
<rect x="31.5" y="653.5" width="8" height="8" fill="#fff" stroke="#8f8f8f"/>
<path d="M33.5 657.5h4" stroke="#20306a" stroke-width="1"/>
<path d="M35.5 655.5v4" stroke="#20306a" stroke-width="1"/>
<use href="#asm" x="46.0" y="647.0" width="17" height="17"/>
<rect x="31.5" y="671.5" width="8" height="8" fill="#fff" stroke="#8f8f8f"/>
<path d="M33.5 675.5h4" stroke="#20306a" stroke-width="1"/>
<path d="M35.5 673.5v4" stroke="#20306a" stroke-width="1"/>
<use href="#asm" x="46.0" y="665.0" width="17" height="17"/>
<rect x="31.5" y="689.5" width="8" height="8" fill="#fff" stroke="#8f8f8f"/>
<path d="M33.5 693.5h4" stroke="#20306a" stroke-width="1"/>
<path d="M35.5 691.5v4" stroke="#20306a" stroke-width="1"/>
<use href="#asm" x="46.0" y="683.0" width="17" height="17"/>
<rect x="12.5" y="707.5" width="8" height="8" fill="#fff" stroke="#8f8f8f"/>
<path d="M14.5 711.5h4" stroke="#20306a" stroke-width="1"/>
<path d="M16.5 709.5v4" stroke="#20306a" stroke-width="1"/>
<use href="#cam" x="27.0" y="701.0" width="17" height="17"/>
<rect x="12.5" y="725.5" width="8" height="8" fill="#fff" stroke="#8f8f8f"/>
<path d="M14.5 729.5h4" stroke="#20306a" stroke-width="1"/>
<path d="M16.5 727.5v4" stroke="#20306a" stroke-width="1"/>
<use href="#light" x="27.0" y="719.0" width="17" height="17"/>
</svg>
<div class="r" style="left:25px;top:2.0px">D:\IronCAD\Oikema\esempi oiKe</div>
<div class="r" style="left:44.5px;top:20.0px">Global Coordinate System</div>
<div class="r b" style="left:44.5px;top:38.0px">Modulo</div>
<div class="r b" style="left:63.5px;top:56.0px">fronte</div>
<div class="r" style="left:82.5px;top:74.0px">Top</div>
<div class="r" style="left:82.5px;top:92.0px">Laterale</div>
<div class="r" style="left:82.5px;top:110.0px">Laterale</div>
<div class="r" style="left:82.5px;top:128.0px">Fondo</div>
<div class="r" style="left:82.5px;top:146.0px">Schiena</div>
<div class="r" style="left:82.5px;top:164.0px">Montante</div>
<div class="r" style="left:82.5px;top:182.0px">Schiena</div>
<div class="r" style="left:82.5px;top:200.0px">Montante</div>
<div class="r b" style="left:82.5px;top:218.0px">Schiena</div>
<div class="r b" style="left:101.5px;top:236.0px">Schiena</div>
<div class="r" style="left:120.5px;top:254.0px">Pannello</div>
<div class="abs" style="left:117.5px;top:272.0px;width:68px;height:18px;background:#0078d7"></div>
<div class="r" style="left:120.5px;top:272.0px;color:#fff;line-height:17px">Sagomatura</div>
<div class="r" style="left:63.5px;top:290.0px">fianco dx</div>
<div class="r" style="left:63.5px;top:308.0px">fianco sx</div>
<div class="r" style="left:63.5px;top:326.0px">CappelloTOP</div>
<div class="r" style="left:63.5px;top:344.0px">BaseDX</div>
<div class="r" style="left:63.5px;top:362.0px">FiancoDX</div>
<div class="r" style="left:63.5px;top:380.0px">FiancoSX</div>
<div class="r" style="left:63.5px;top:398.0px">Frontale</div>
<div class="r" style="left:63.5px;top:416.0px">Cappello</div>
<div class="r" style="left:63.5px;top:434.0px">BaseSX</div>
<div class="r" style="left:63.5px;top:452.0px">BaseFX</div>
<div class="r" style="left:44.5px;top:470.0px">Telecamere</div>
<div class="r" style="left:44.5px;top:488.0px">Luci</div>
<div class="abs" style="left:0;top:603px;width:200px;height:17px;background:#f0f0f0"></div>
<div class="abs" style="left:18px;top:603px;width:113px;height:17px;background:#cdcdcd"></div>
<svg width="200" height="17" viewBox="0 0 200 17" style="left:0;top:603px"><path d="M11 4.500l-4 4 4 4M187 4.500l4 4-4 4" fill="none" stroke="#505050" stroke-width="1.800"/></svg>
</div>
<!-- bottom tabs -->
<div class="abs" style="left:3px;top:852px;width:59px;height:23px;background:#fff;border:1px solid #b9b9b9;border-top:none"></div>
<svg width="210" height="24" viewBox="0 0 210 24" style="left:0;top:852px">
 <g fill="none" stroke="#7aa7c8" stroke-width=".9"><path d="M15 5l1.500 4h-3zM12.500 11l1.500 4.500h-3zM17.500 11l1.500 4.500h-3z"/><path d="M13 10h4M10.500 17h9"/></g>
 <circle cx="74" cy="10" r="4.800" fill="#e8f2fa" stroke="#8a8a8a" stroke-width="1.300"/><path d="M77.500 13.500l4 4.500" stroke="#6a6a6a" stroke-width="2.200"/>
 <rect x="137.500" y="3.500" width="10" height="14" fill="#fff" stroke="#7a7a7a"/><rect x="139" y="5" width="5" height="5" fill="#2f62a8"/><path d="M139 13h6M139 15.500h6" stroke="#888" stroke-width="1"/>
</svg>
<div class="t" style="left:25px;top:856px;font-size:11.600px;color:#444;line-height:16px">Scene</div>
<div class="t" style="left:85px;top:856px;font-size:11.600px;color:#444;line-height:16px">Ricerca</div>
<div class="t" style="left:152px;top:856px;font-size:11.600px;color:#444;line-height:16px">Proprie...</div>
</div>
<!-- doc tabs -->
<div class="abs" style="left:1px;top:163px;width:1597px;height:23px;background:#ebebeb"></div>
<svg width="1600" height="24" viewBox="0 163 1600 24" style="left:0;top:163px">
 <path d="M5 186L22 168.500q1.500-1.500 4-1.500h95l-14 19z" fill="#f6f6f6" stroke="#b4b4b4" stroke-width="1"/>
 <path d="M108 186l16.500-17.500q1.500-1.500 4-1.500h113q3 0 3 3v16z" fill="#fff" stroke="#b4b4b4" stroke-width="1"/>
 <path d="M108 186h137.500" stroke="#fff" stroke-width="1.500"/>
 <path d="M232 172.500l6.500 6.500M238.500 172.500l-6.500 6.500" stroke="#555" stroke-width="1.400"/>
 <path d="M1365.500 174h9l-4.500 5z" fill="#666"/>
</svg>
<div class="t" style="left:37px;top:168px;font-size:11.600px;color:#444;line-height:16px">prova 180.ics*</div>
<div class="t" style="left:142px;top:168px;font-size:11.600px;color:#333;font-weight:bold;line-height:16px;letter-spacing:0">reception.ics*</div>

<svg id="view" width="1169" height="691" viewBox="211 186 1169 691" style="left:211px;top:186px;overflow:hidden">
<defs>
<linearGradient id="sky" x1="0" y1="0" x2="0.10" y2="1"><stop offset="0" stop-color="#5077a6"/><stop offset=".3" stop-color="#7f9cc6"/><stop offset=".6" stop-color="#b7c6de"/><stop offset=".85" stop-color="#eef2f7"/><stop offset="1" stop-color="#ffffff"/></linearGradient>
<linearGradient id="wood" x1="0" y1="0" x2="1" y2="1"><stop offset="0" stop-color="#9c6c44"/><stop offset=".5" stop-color="#a5754d"/><stop offset="1" stop-color="#9a6a42"/></linearGradient>
<linearGradient id="rbody" gradientUnits="userSpaceOnUse" x1="0" y1="470" x2="0" y2="877"><stop offset="0" stop-color="#9f9b99"/><stop offset=".25" stop-color="#a8a3a0"/><stop offset=".65" stop-color="#beb4aa"/><stop offset="1" stop-color="#c9bdb0"/></linearGradient>
<linearGradient id="ubT" gradientUnits="userSpaceOnUse" x1="740" y1="186" x2="1382" y2="400"><stop offset="0" stop-color="#69615c"/><stop offset="1" stop-color="#8c7d6e"/></linearGradient>
<linearGradient id="ubL" gradientUnits="userSpaceOnUse" x1="300" y1="0" x2="740" y2="0"><stop offset="0" stop-color="#a08a6e"/><stop offset="1" stop-color="#9c8467"/></linearGradient>
<linearGradient id="ubR" gradientUnits="userSpaceOnUse" x1="740" y1="250" x2="1380" y2="560"><stop offset="0" stop-color="#7e746c"/><stop offset="1" stop-color="#968778"/></linearGradient>
<pattern id="grain" width="70" height="9" patternUnits="userSpaceOnUse" patternTransform="rotate(24)"><path d="M0 2h45M12 6h50" stroke="#86552f" stroke-width=".8" opacity=".3"/><path d="M5 4h36" stroke="#b88a62" stroke-width=".7" opacity=".35"/></pattern>
<linearGradient id="fia" gradientUnits="userSpaceOnUse" x1="0" y1="224" x2="0" y2="720"><stop offset="0" stop-color="#8a8d9b"/><stop offset=".35" stop-color="#a9a7aa"/><stop offset="1" stop-color="#c3bcb6"/></linearGradient>
<linearGradient id="cb1" gradientUnits="userSpaceOnUse" x1="930" y1="186" x2="1380" y2="340"><stop offset="0" stop-color="#687088"/><stop offset="1" stop-color="#96918c"/></linearGradient>
<linearGradient id="cb2" gradientUnits="userSpaceOnUse" x1="900" y1="186" x2="1380" y2="345"><stop offset="0" stop-color="#786a5c"/><stop offset="1" stop-color="#9b8c7d"/></linearGradient>
<linearGradient id="cb3" gradientUnits="userSpaceOnUse" x1="880" y1="186" x2="1380" y2="352"><stop offset="0" stop-color="#7a6856"/><stop offset="1" stop-color="#9a8a78"/></linearGradient>
<clipPath id="cyz"><polygon points="307,186 717,186 722,480 731,877 300,877"/></clipPath>
</defs>
<rect x="211" y="186" width="1169" height="691" fill="url(#sky)"/>
<polygon points="303,186 968,186 1323,303.3 1382,322 1382,877 576,877 336,755 282.5,729 281,711 304,704 282,224 259,222 257,204 303,193" fill="#a8947c"/>
<polygon points="303,186 740,186 740,355.3 740,355.3 680,333.3 590,305 470,262 306,207.0 303,193" fill="#8f785f"/>
<polygon points="740,186 968,186.0 1323,303.3 1380,321.7 1382,322.3 1382,597.4 1380,596.7 1324,576.7 846,394.2 740,355.3" fill="url(#ubR)"/>
<polygon points="614,186 740,186 740,230.2 740,230.2 700,216 614,186.0" fill="#7d6958"/>
<polygon points="740,186 968,186 968,186.0 1323,303.3 1380,321.7 1382,322.3 1382,457.4 1380,456.7 1323,436.7 846,267.8 740,230.2" fill="url(#ubT)"/>
<polygon points="320,186 614,186 560,192 320,192" fill="#7d6c5c" opacity=".8"/>
<polygon points="929,173.1 968,186 1323,303.3 1380,321.7 1382,322.3 1382,338.7 1380,338 1323,318 929,186.0" fill="url(#cb1)"/>
<polygon points="905,178.0 929,186 1323,318 1380,338 1382,338.7 1382,349.7 1380,349 1323,330 905,186.0" fill="url(#cb2)"/>
<polygon points="873.5,175.1 905,186 1323,330 1380,349 1382,349.7 1382,356.6 1380,356 1323,339 873.5,186.0" fill="url(#cb3)"/>
<polygon points="551,164.0 614,186 700,216 846,267.8 1323,436.7 1380,456.7 1382,457.4 1382,482.4 1380,481.7 1323,461.7 846,288.5 700,237.8 600,203 551,186.0" fill="#a58769"/>
<polygon points="303,186 320,186 320.7,209 306,207 303,193" fill="#77777e"/>
<polygon points="257,204 303,193 306,207 340,235.1" fill="#7b8496"/>
<polygon points="306,207.0 470,262 590,305 680,333.3 846,394.2 1324,576.7 1380,596.7 1382,597.4 1382,610.8 1380,610 1324,588.9 846,405 680,342.5 590,314 470,269 310,214 306,212.6" fill="#8b7a68"/>
<polygon points="330,220.9 470,269 590,314 680,342.5 846,405 1324,588.9 1380,610 1382,610.8 1382,635.2 1380,634.4 1324,613.3 846,428.3 680,365 590,328.2 470,283.8 330,231.3" fill="#73665b"/>
<polygon points="257,204 306,207 310,212 330,220.9 330,231.3" fill="#7d808a"/>
<polygon points="258,204.4 470,283.8 590,328.2 680,365 846,428.3 1324,613.3 1380,634.4 1382,635.2 1382,659.7 1380,658.9 1324,637.8 846,450.8 680,386.7 470,304.7 259,222 258,221.6" fill="#b39c84"/>
<polygon points="257,204 259,222 318,245.1 318,226.9" fill="#8f96a6"/>
<polygon points="283,231.4 470,304.7 680,386.7 846,450.8 1324,637.8 1380,658.9 1382,659.7 1382,877 576,877 336,755 304,712" fill="url(#rbody)"/>
<polygon points="742,410.6 846,450.8 1324,637.8 1380,658.9 1382,659.7 1382,683.0 1380,682.2 1324,661.1 846,471.7 742,432.3" fill="#b2b5be"/>
<polygon points="718,401.4 742,410.6 742,432.3 720,424 718,423.2" fill="#b5a38b"/>
<polygon points="722,424.8 846,471.7 1324,661.1 1380,682.2 1382,683.0 1382,690.8 1380,690 1324,668.9 846,479 724,432 722,431.2" fill="#9c8874"/>
<polygon points="724,432.0 846,479 1324,668.9 1380,690 1382,690.8 1382,709.7 1380,708.9 1324,687.8 846,495 727.5,452.5 724,451.2" fill="#b59d84"/>
<polygon points="728,452.7 846,495 1324,687.8 1380,708.9 1382,709.7 1382,717.5 1380,716.7 1324,695.6 846,501 730,458.7 728,458.0" fill="#c3beba"/>
<polygon points="736,460.9 846,501 1324,695.6 1380,716.7 1382,717.5 1382,743.0 1380,742.2 1324,721 846,527.5 740,486 736,484.4" fill="#c6c1bd"/>
<polygon points="740,486.0 846,527.5 1324,721 1380,742.2 1382,743.0 1382,753.0 1380,752.2 1324,728.9 846,535 740,491.0" fill="#8f8680"/>
<polygon points="748,494.3 846,535 1324,728.9 1380,752.2 1382,753.0 1382,877 939,876 887.5,855 747.5,787.5 742,640" fill="url(#rbody)"/>
<polygon points="728,455 740,486 742.5,630 747.5,787.5 735,802 731,630" fill="#967f6c"/>
<polygon points="747.5,787.5 887.5,855 939,876 1000,906.0 1000,877 840,877 735,802" fill="#b5a18b"/>
<polygon points="912,877 939,876 1000,906 1382,906 1382,877" fill="#cabfb3"/>
<rect x="1027" y="815" width="4" height="62" fill="#5a5550"/>
<rect x="1031" y="815" width="15" height="62" fill="#c3b7aa"/>
<rect x="1046" y="815" width="4" height="62" fill="#5a5550"/>
<rect x="1050" y="815" width="18" height="62" fill="#b59c84"/>
<rect x="1068" y="815" width="3" height="62" fill="#6a625c"/>
<rect x="1071" y="815" width="19" height="62" fill="#c3b6a8"/>
<rect x="1090" y="815" width="4" height="62" fill="#5a5550"/>
<rect x="1094" y="815" width="34" height="62" fill="#c6bdb3"/>
<rect x="1128" y="815" width="4" height="62" fill="#5a5550"/>
<rect x="1132" y="815" width="13" height="62" fill="#b7a089"/>
<rect x="1145" y="815" width="4" height="62" fill="#4a4642"/>
<polygon points="282,224 308,234 330,712 304,712" fill="url(#fia)"/>
<polygon points="282.5,221 304,217.5 318,238 282,224" fill="#8e8f9c"/>
<polygon points="307,207 318,245.1 318,245.1 470,304.7 680,386.7 717,401.0 722,480 731,840 731,877 673.7,877 359,721.7 338.7,727" fill="#beaa69"/>
<polygon points="307,207.3 470,262 590,305 680,333.3 717,346.9 717,356.4 680,342.5 590,314 470,269 310,214 307,213.0" fill="#87734b"/>
<polygon points="310,214.0 470,269 590,314 680,342.5 717,356.4 717,379.1 680,365 590,328.2 470,283.8 310,223.9" fill="#968241"/>
<polygon points="318,226.9 470,283.8 590,328.2 680,365 717,379.1 717,401.0 680,386.7 470,304.7 318,245.1" fill="#b9a064"/>
<polygon points="307,207 320,212 340.5,727 330,712" fill="#b9b478"/>
<polygon points="318,238 328,250 346,300 359,721.7 338.7,727 329,510" fill="#aaa56e"/>
<polygon points="340,295 364,291 381,630 385,700 359,721.7 346,440" fill="#b9b678"/>
<polygon points="378,653 681,795 700.5,825.3 731,840 731,840.0 700.5,825.3 656.6,804.6 357.5,663.8 359,700" fill="#c3ad62"/>
<polygon points="357.5,663.8 656.6,804.6 700.5,825.3 731,840.0 731,877 673.7,877 359,721.7" fill="#b49b69"/>
<polygon points="357.5,663.8 656.6,804.6 700,825.1 700,836 357.5,674" fill="#96804f" opacity=".75"/>
<polygon points="364,291 672,411 681,795 378,653" fill="#d3bd66"/>
<polygon points="376,314 646,424 657,762 384,642" fill="#d6c05e"/>
<polygon points="388,342.7 643,443 651.5,743 393,631" fill="#b4a44e"/>
<polygon points="390,355 627,449 635,733 401,628" fill="url(#wood)"/>
<polygon points="390,355 627,449 635,733 401,628" fill="url(#grain)"/>
<polygon points="672,411 690,436 700.5,825 681,795" fill="#beaa5f"/>
<polygon points="690,436 717,446 722,480 731,840 700.5,825" fill="#afaf69"/>
<polygon points="646,416 670,412 710,429 691,433" fill="#b9a77c" opacity=".8"/>
<polygon points="731,607 745,601 758,618 758,634 745,640 731,626" fill="#a08c7c" opacity=".75" stroke="#5e5148" stroke-width="1.1"/>
<path d="M745 601v39M731 607l14 17 13-6" fill="none" stroke="#5e5148" stroke-width=".9" opacity=".8"/>
<polygon points="281,711 304,704 340,727 336,737.5 617.6,877 576,877 336,755 282.5,729" fill="#d6cabd"/>
<polygon points="281,711 304,704 340,727 336,737.5" fill="#bfb1a2"/>
<polygon points="336,737.5 359,721.7 673.7,877 617.6,877" fill="#c4b7a6"/>
<path d="M366 214.7L535.8 191.7" stroke="#a88560" stroke-width="1.6" fill="none" opacity=".45"/>
<path d="M461 252L659.4 214.7" stroke="#a88560" stroke-width="1.6" fill="none" opacity=".45"/>
<path d="M553 281L653.6 257.9" stroke="#a88560" stroke-width="1.6" fill="none" opacity=".45"/>
<path d="M337 197L550 186" stroke="#a88560" stroke-width="1.6" fill="none" opacity=".45"/>
<path d="M500 262L650 232" stroke="#a88560" stroke-width="1.6" fill="none" opacity=".45"/>
<path d="M649 214.0L650 323.6" stroke="#a07c58" stroke-width="1.1" fill="none" opacity=".5"/>
<path d="M660 217.3L661 327.0" stroke="#a07c58" stroke-width="1.1" fill="none" opacity=".5"/>
<path d="M676 222.1L677 332.0" stroke="#a07c58" stroke-width="1.1" fill="none" opacity=".5"/>
<path d="M690 226.3L691 337.0" stroke="#a07c58" stroke-width="1.1" fill="none" opacity=".5"/>
<path d="M702 229.9L703 341.4" stroke="#a07c58" stroke-width="1.1" fill="none" opacity=".5"/>
<g stroke-linecap="round" stroke-linejoin="round">
<polyline points="968,186.0 1323,303.3 1380,321.7 1382,322.3" fill="none" stroke="#4e4a48" stroke-width="1.4"/>
<polyline points="929,186.0 1323,318 1380,338 1382,338.7" fill="none" stroke="#5e5852" stroke-width="1.2" opacity=".8"/>
<polyline points="905,186.0 1323,330 1380,349 1382,349.7" fill="none" stroke="#5e5852" stroke-width="1.2" opacity=".8"/>
<polyline points="873.5,186.0 1323,339 1380,356 1382,356.6" fill="none" stroke="#5e5852" stroke-width="1.2" opacity=".7"/>
<polyline points="614,186.0 700,216 846,267.8 1323,436.7 1380,456.7 1382,457.4" fill="none" stroke="#4c4843" stroke-width="2.2"/>
<polyline points="551,186.0 600,203 700,237.8 846,288.5 1323,461.7 1380,481.7 1382,482.4" fill="none" stroke="#5e564e" stroke-width="1.1" opacity=".8"/>
<polyline points="306,207.0 470,262 590,305 680,333.3 846,394.2 1324,576.7 1380,596.7 1382,597.4" fill="none" stroke="#59524a" stroke-width="1.2"/>
<polyline points="330,220.9 470,269 590,314 680,342.5 846,405 1324,588.9 1380,610 1382,610.8" fill="none" stroke="#48443f" stroke-width="2.2"/>
<polyline points="257,204.0 470,283.8 590,328.2 680,365 846,428.3 1324,613.3 1380,634.4 1382,635.2" fill="none" stroke="#48443f" stroke-width="2.4"/>
<polyline points="259,222.0 470,304.7 680,386.7 846,450.8 1324,637.8 1380,658.9 1382,659.7" fill="none" stroke="#48443f" stroke-width="1.6"/>
<polyline points="720,424.0 846,471.7 1324,661.1 1380,682.2 1382,683.0" fill="none" stroke="#48443f" stroke-width="1.3"/>
<polyline points="724,432.0 846,479 1324,668.9 1380,690 1382,690.8" fill="none" stroke="#7a6a5c" stroke-width="1" opacity=".7"/>
<polyline points="727.5,452.5 846,495 1324,687.8 1380,708.9 1382,709.7" fill="none" stroke="#48443f" stroke-width="1.5"/>
<polyline points="730,458.7 846,501 1324,695.6 1380,716.7 1382,717.5" fill="none" stroke="#48443f" stroke-width="1.3"/>
<polyline points="740,486.0 846,527.5 1324,721 1380,742.2 1382,743.0" fill="none" stroke="#48443f" stroke-width="2"/>
<polyline points="740,491.0 846,535 1324,728.9 1380,752.2 1382,753.0" fill="none" stroke="#48443f" stroke-width="1.5"/>
<polyline points="340,295.0 725,450.0" fill="none" stroke="#48443f" stroke-width="1.6"/>
<path d="M257 204L303 193" stroke="#48443f" stroke-width="1.4" fill="none"/>
<path d="M257 204L259 222" stroke="#48443f" stroke-width="1.4" fill="none"/>
<path d="M303 186L303.7 205" stroke="#48443f" stroke-width="1.4" fill="none"/>
<path d="M314 186L315 206" stroke="#48443f" stroke-width="1.1" fill="none"/>
<path d="M320 186L320.7 208" stroke="#48443f" stroke-width="1.1" fill="none"/>
<path d="M282.5 221L304 217.5" stroke="#48443f" stroke-width="1.2" fill="none"/>
<path d="M282 224L304 705" stroke="#48443f" stroke-width="1.6" fill="none"/>
<path d="M282 224L318 238" stroke="#48443f" stroke-width="1.2" fill="none"/>
<path d="M317.5 237.5L325 405" stroke="#48443f" stroke-width="1.8" fill="none"/>
<path d="M325 405L336.2 630" stroke="#48443f" stroke-width="1.8" fill="none"/>
<path d="M336.2 630L338.7 727" stroke="#48443f" stroke-width="1.8" fill="none"/>
<path d="M340 234L340 295" stroke="#48443f" stroke-width="1.6" fill="none"/>
<path d="M740 186L740 486" stroke="#6a5f55" stroke-width="1" fill="none" opacity=".8"/>
<path d="M727.5 452.5L740 486" stroke="#48443f" stroke-width="1.3" fill="none"/>
<path d="M740 487L747.5 787.5" stroke="#48443f" stroke-width="1.6" fill="none"/>
<path d="M744 489L751 789" stroke="#48443f" stroke-width="1.1" fill="none"/>
<path d="M727.5 452.5L732.5 630" stroke="#48443f" stroke-width="1.4" fill="none"/>
<path d="M732.5 630L736 802" stroke="#48443f" stroke-width="1.4" fill="none"/>
<polyline points="747.5,787.5 887.5,855 939,876 1000,906.0" fill="none" stroke="#48443f" stroke-width="2.4"/>
<path d="M747.5 787.5L735 802" stroke="#48443f" stroke-width="1.3" fill="none"/>
<path d="M735 802L862 855" stroke="#48443f" stroke-width="1.3" fill="none"/>
<path d="M862 855L905 877" stroke="#48443f" stroke-width="1.3" fill="none"/>
<path d="M800 828L905 877" stroke="#48443f" stroke-width="1.2" fill="none"/>
<path d="M281 711L304 704" stroke="#48443f" stroke-width="1.3" fill="none"/>
<path d="M281 711L282.5 729" stroke="#48443f" stroke-width="1.5" fill="none"/>
<path d="M281 711L336 737.5" stroke="#48443f" stroke-width="1.5" fill="none"/>
<polyline points="282.5,729.0 336,755 576,877.0" fill="none" stroke="#48443f" stroke-width="1.6"/>
<path d="M336 737.5L336 755" stroke="#48443f" stroke-width="1.5" fill="none"/>
<polyline points="336,737.5 617.6,877.0" fill="none" stroke="#48443f" stroke-width="1.6"/>
<path d="M304 704L340 727" stroke="#48443f" stroke-width="1.2" fill="none"/>
<path d="M336 737.5L359 721.7" stroke="#48443f" stroke-width="1.2" fill="none"/>
<polyline points="359,721.7 673.7,877.0" fill="none" stroke="#48443f" stroke-width="1.6"/>
<path d="M357.5 663.8L359 721.7" stroke="#48443f" stroke-width="1.6" fill="none"/>
<polyline points="357.5,663.8 656.6,804.6 700.5,825.3 731,840.0" fill="none" stroke="#48443f" stroke-width="1.6"/>
<path d="M651.5 600L657.8 804.6" stroke="#48443f" stroke-width="1.5" fill="none"/>
<path d="M650 421L651.5 600" stroke="#48443f" stroke-width="1.5" fill="none"/>
<path d="M693.5 600L700.5 825.3" stroke="#48443f" stroke-width="1.5" fill="none"/>
<path d="M690 436L693.5 600" stroke="#48443f" stroke-width="1.5" fill="none"/>
<path d="M700.5 825.3L780 858" stroke="#48443f" stroke-width="1.3" fill="none"/>
<path d="M780 858L820 877" stroke="#48443f" stroke-width="1.3" fill="none"/>
</g>
<g stroke="#f2ea3a" fill="none" stroke-width="1">
<path d="M307.5 207.5L317.5 405" stroke="#f0e83c" stroke-width="1" fill="none"/>
<path d="M317.5 405L326 630" stroke="#f0e83c" stroke-width="1" fill="none"/>
<path d="M326 630L330 712" stroke="#f0e83c" stroke-width="1" fill="none"/>
<path d="M320 209L330 405" stroke="#f0e83c" stroke-width="1" fill="none" opacity=".8"/>
<path d="M330 405L340 630" stroke="#f0e83c" stroke-width="1" fill="none" opacity=".8"/>
<polyline points="310,211.5 470,266.5 590,311.5 680,340.0 717,353.9" stroke-width="1"/>
<path d="M717 353L722 480" stroke="#f0e83c" stroke-width="1" fill="none"/>
<path d="M722 480L731 877" stroke="#f0e83c" stroke-width="1" fill="none"/>
<path d="M709 356L714 480" stroke="#f0e83c" stroke-width="1" fill="none" opacity=".8"/>
<path d="M714 480L722 877" stroke="#f0e83c" stroke-width="1" fill="none" opacity=".8"/>
<path d="M364 291L672 411" stroke="#f0e83c" stroke-width="1" fill="none"/>
<path d="M672 411L681 795" stroke="#f0e83c" stroke-width="1" fill="none"/>
<path d="M681 795L378 653" stroke="#f0e83c" stroke-width="1" fill="none"/>
<path d="M378 653L364 291" stroke="#f0e83c" stroke-width="1" fill="none"/>
<path d="M376 314L646 424" stroke="#f0e83c" stroke-width="1" fill="none"/>
<path d="M646 424L657 762" stroke="#f0e83c" stroke-width="1" fill="none"/>
<path d="M657 762L384 642" stroke="#f0e83c" stroke-width="1" fill="none"/>
<path d="M384 642L376 314" stroke="#f0e83c" stroke-width="1" fill="none"/>
<path d="M364 291L376 314" stroke="#f0e83c" stroke-width="1" fill="none" opacity=".9"/>
<path d="M672 411L646 424" stroke="#f0e83c" stroke-width="1" fill="none" opacity=".9"/>
<path d="M681 795L657 762" stroke="#f0e83c" stroke-width="1" fill="none" opacity=".9"/>
<path d="M378 653L384 642" stroke="#f0e83c" stroke-width="1" fill="none" opacity=".9"/>
<path d="M388 342.7L390 355" stroke="#f0e83c" stroke-width="1" fill="none" opacity=".9"/>
<path d="M643 443L627 449" stroke="#f0e83c" stroke-width="1" fill="none" opacity=".9"/>
<path d="M651.5 743L635 733" stroke="#f0e83c" stroke-width="1" fill="none" opacity=".9"/>
<path d="M393 631L401 628" stroke="#f0e83c" stroke-width="1" fill="none" opacity=".9"/>
<path d="M388 342.7L643 443" stroke="#f0e83c" stroke-width="1" fill="none"/>
<path d="M643 443L651.5 743" stroke="#f0e83c" stroke-width="1" fill="none"/>
<path d="M651.5 743L393 631" stroke="#f0e83c" stroke-width="1" fill="none"/>
<path d="M393 631L388 342.7" stroke="#f0e83c" stroke-width="1" fill="none"/>
<path d="M376 314L388 342.7" stroke="#f0e83c" stroke-width="1" fill="none" opacity=".9"/>
<path d="M646 424L643 443" stroke="#f0e83c" stroke-width="1" fill="none" opacity=".9"/>
<path d="M657 762L651.5 743" stroke="#f0e83c" stroke-width="1" fill="none" opacity=".9"/>
<path d="M384 642L393 631" stroke="#f0e83c" stroke-width="1" fill="none" opacity=".9"/>
<path d="M388.5 345.8L639.0 444.5" stroke="#f0e83c" stroke-width="0.9" fill="none" opacity=".9"/>
<path d="M639.0 444.5L647.4 740.5" stroke="#f0e83c" stroke-width="0.9" fill="none" opacity=".9"/>
<path d="M647.4 740.5L395.0 630.2" stroke="#f0e83c" stroke-width="0.9" fill="none" opacity=".9"/>
<path d="M395.0 630.2L388.5 345.8" stroke="#f0e83c" stroke-width="0.9" fill="none" opacity=".9"/>
<path d="M389.0 348.9L635.0 446.0" stroke="#f0e83c" stroke-width="0.9" fill="none" opacity=".9"/>
<path d="M635.0 446.0L643.2 738.0" stroke="#f0e83c" stroke-width="0.9" fill="none" opacity=".9"/>
<path d="M643.2 738.0L397.0 629.5" stroke="#f0e83c" stroke-width="0.9" fill="none" opacity=".9"/>
<path d="M397.0 629.5L389.0 348.9" stroke="#f0e83c" stroke-width="0.9" fill="none" opacity=".9"/>
<path d="M389.5 351.9L631.0 447.5" stroke="#f0e83c" stroke-width="0.9" fill="none" opacity=".9"/>
<path d="M631.0 447.5L639.1 735.5" stroke="#f0e83c" stroke-width="0.9" fill="none" opacity=".9"/>
<path d="M639.1 735.5L399.0 628.8" stroke="#f0e83c" stroke-width="0.9" fill="none" opacity=".9"/>
<path d="M399.0 628.8L389.5 351.9" stroke="#f0e83c" stroke-width="0.9" fill="none" opacity=".9"/>
<path d="M390 355L627 449" stroke="#f0e83c" stroke-width="1.1" fill="none"/>
<path d="M627 449L635 733" stroke="#f0e83c" stroke-width="1.1" fill="none"/>
<path d="M635 733L401 628" stroke="#f0e83c" stroke-width="1.1" fill="none"/>
<path d="M401 628L390 355" stroke="#f0e83c" stroke-width="1.1" fill="none"/>
<path d="M672 411L717 430" stroke="#f0e83c" stroke-width="1" fill="none" opacity=".8"/>
<path d="M681 795L700.5 825.3" stroke="#f0e83c" stroke-width="1" fill="none" opacity=".7"/>
</g>
<polygon points="364.700,613.700 374,612 377.400,630.600 379.500,655 382.900,724.800 369.800,727.800 366.800,646.700 368,630.600" fill="none" stroke="#35d0d0" stroke-width="1.200"/>
<path d="M373 658.500l9-5M377 661l8 3" stroke="#1f8f8f" stroke-width="1.600"/><circle cx="373" cy="658.500" r="3" fill="#1f8f8f" stroke="#0c2c2c" stroke-width="1"/>
<g font-family="Liberation Sans, sans-serif" font-size="10"><text x="244.500" y="815" fill="#1c2fb0">Z</text><text x="266.500" y="834" fill="#2faa3a">Y</text><text x="263" y="848" fill="#d02a2a">X</text>
<path d="M247.500 838v-14" stroke="#2a3fc8" stroke-width="2"/><path d="M244.500 826l3-7 3 7z" fill="#2a3fc8"/>
<path d="M247.500 838l12-5" stroke="#2faa3a" stroke-width="2"/><path d="M256 830l8 1.500-6 4z" fill="#2faa3a"/>
<path d="M247.500 838l8 4" stroke="#e04a4a" stroke-width="2.400"/><path d="M251 843.500l8 .5-4-5z" fill="#e86a6a"/></g>
</svg><div id="dlg" style="position:absolute;left:847px;top:204px;width:477px;height:619px;background:#f0f0f0;box-shadow:0 2px 14px 2px rgba(0,0,0,.5),0 0 3px rgba(0,0,0,.45);font-size:11px;color:#000">
<style>
#dlg .d{position:absolute;white-space:nowrap;line-height:14px;font-size:11px;letter-spacing:.05px}
#dlg .gb{position:absolute;border:1px solid #e2e2e2}
#dlg .in{position:absolute;background:#fff;border:1px solid #7a7a7a;height:19px}
#dlg .ind{position:absolute;background:#f0f0f0;border:1px solid #cfcfcf;height:19px}
</style>
<div class="abs" style="left:0;top:0;width:477px;height:30px;background:#4b4a48"></div>
<svg width="20" height="20" viewBox="0 0 20 20" style="left:7px;top:5px"><defs><radialGradient id="glb" cx=".4" cy=".35" r=".7"><stop offset="0" stop-color="#8fc3ff"/><stop offset=".5" stop-color="#2f6fd8"/><stop offset="1" stop-color="#12357e"/></radialGradient></defs><circle cx="9" cy="10.500" r="7.500" fill="url(#glb)"/><path d="M5.500 14q0-8 3.500-9 3 1 3.500 9M7 10l2 4 2-4" fill="none" stroke="#cfe4ff" stroke-width="1.200"/></svg>
<div class="t" style="left:29px;top:8px;color:#fff;font-size:11.800px;line-height:15px;letter-spacing:0">Oikema Engineering - Sagomatura</div>
<svg width="14" height="14" viewBox="0 0 14 14" style="left:454px;top:8px"><path d="M2 2l10 10M12 2L2 12" stroke="#fff" stroke-width="1.200"/></svg>
<!-- round buttons -->
<svg width="130" height="40" viewBox="1195 236 130 40" style="left:348px;top:32px">
 <defs>
 <linearGradient id="bb" x1="0" y1="0" x2="0" y2="1"><stop offset="0" stop-color="#7fd0ec"/><stop offset="1" stop-color="#5bb8e0"/></linearGradient>
 <linearGradient id="gb" x1="0" y1="0" x2="0" y2="1"><stop offset="0" stop-color="#9ad41c"/><stop offset="1" stop-color="#7cbc0e"/></linearGradient>
 <linearGradient id="rb" x1="0" y1="0" x2="0" y2="1"><stop offset="0" stop-color="#f04a38"/><stop offset="1" stop-color="#f4705e"/></linearGradient>
 </defs>
 <circle cx="1221" cy="256" r="14.200" fill="url(#bb)" stroke="#2a97c0" stroke-width="1.800"/><circle cx="1221" cy="256" r="12.600" fill="none" stroke="#b5e8f8" stroke-width="1" opacity=".8"/><rect x="1218" y="253" width="6" height="6" fill="#fff"/>
 <circle cx="1261" cy="256" r="14.200" fill="url(#gb)" stroke="#5c9a0c" stroke-width="1.800"/><circle cx="1261" cy="256" r="12.600" fill="none" stroke="#c3ec5e" stroke-width="1" opacity=".7"/><path d="M1254.500 257l4.500 4 8-8.500" fill="none" stroke="#fff" stroke-width="3.200"/>
 <path d="M1293 241.500h12l8.500 8.500v12l-8.500 8.500h-12l-8.500-8.500v-12z" fill="url(#rb)" stroke="#d2301e" stroke-width="1.600" stroke-linejoin="round"/><path d="M1293.500 250.500l11 11M1304.500 250.500l-11 11" stroke="#fff" stroke-width="4"/>
</svg>
<!-- tree -->
<div class="abs" style="left:3px;top:73px;width:207px;height:277px;background:#fff;border:1px solid #82878f"></div>
<svg width="207" height="120" viewBox="850 277 207 120" style="left:3px;top:73px">
 <defs>
 <symbol id="fold" viewBox="0 0 16 14" overflow="visible"><path d="M.5 1.500h5l1.500 2h7v9.500h-13.500z" fill="#f7d774" stroke="#d9a93a" stroke-width=".9"/><path d="M.5 13l2.500-6.500h12.500l-2.500 6.500z" fill="#fde9a2" stroke="#d9a93a" stroke-width=".9"/></symbol>
 <symbol id="gear" viewBox="0 0 16 14" overflow="visible"><rect x=".5" y=".5" width="9" height="11" fill="#fff" stroke="#9a9a9a" stroke-width=".9"/><path d="M2 3h6M2 5h6M2 7h4" stroke="#aaa" stroke-width=".8"/><circle cx="10.500" cy="9.500" r="3.600" fill="#8a8a8a" stroke="#666" stroke-width="1.600" stroke-dasharray="1.500 1.200"/><circle cx="10.500" cy="9.500" r="3" fill="#9a9a9a"/><circle cx="10.500" cy="9.500" r="1.300" fill="#fff"/></symbol>
 </defs>
 <g stroke="#9a9a9a" stroke-dasharray="1 1.500" fill="none"><path d="M858.500 291v88"/><path d="M873.500 294v40"/><path d="M873.500 302.500h8M873.500 318.500h8M873.500 334.500h8"/><path d="M863 286.500h3M863 350.500h3M863 366.500h3M863 382.500h3"/></g>
 <g fill="#fff" stroke="#919191"><rect x="854.500" y="282.500" width="8" height="8"/><rect x="854.500" y="346.500" width="8" height="8"/><rect x="854.500" y="362.500" width="8" height="8"/><rect x="854.500" y="378.500" width="8" height="8"/></g>
 <path d="M856.500 286.500h4M856.500 350.500h4M858.500 348.500v4M856.500 366.500h4M858.500 364.500v4M856.500 382.500h4M858.500 380.500v4" stroke="#30407a" stroke-width="1"/>
 <use href="#fold" x="866" y="279.500" width="16" height="14"/><use href="#fold" x="866" y="343.500" width="16" height="14"/><use href="#fold" x="866" y="359.500" width="16" height="14"/><use href="#fold" x="866" y="375.500" width="16" height="14"/>
 <use href="#gear" x="881.500" y="295" width="16" height="14"/><use href="#gear" x="881.500" y="311" width="16" height="14"/><use href="#gear" x="881.500" y="327" width="16" height="14"/>
 <rect x="885.500" y="278.500" width="68" height="15" fill="none" stroke="#000" stroke-dasharray="1 1" shape-rendering="crispEdges"/>
 <rect x="900" y="294.500" width="77.500" height="15" fill="#0078d7"/>
</svg>
<div class="d" style="left:40px;top:75px">Bande Piatte</div>
<div class="d" style="left:55px;top:91px;color:#fff">Banda Piatta 1</div>
<div class="d" style="left:55px;top:107px">Banda Piatta 2</div>
<div class="d" style="left:55px;top:123px">Banda Piatta 3</div>
<div class="d" style="left:40px;top:139px">Lavorazioni Doppie</div>
<div class="d" style="left:40px;top:155px">Lavorazioni Singole</div>
<div class="d" style="left:40px;top:171px">Profilature e Controprofilature</div>
<!-- preview -->
<div class="abs" style="left:220px;top:73px;width:251px;height:250px;background:#fff"></div>
<svg width="251" height="250" viewBox="1067 277 251 250" style="left:220px;top:73px">
 <defs><pattern id="og" width="11" height="200" patternUnits="userSpaceOnUse" patternTransform="rotate(-73 1190 400)"><rect width="11" height="200" fill="#f8a043"/><path d="M3 0v200" stroke="#ea8c2e" stroke-width="2.200"/><path d="M8 0v200" stroke="#fbb460" stroke-width="1.600"/></pattern></defs>
 <path d="M1108.500 430.500v-40.200l128.500-11v-5l9.500-.3q10-1.500 11.500-14h17v70.500z" fill="url(#og)" stroke="#9a5a1c" stroke-width=".9"/>
</svg>
<div class="d" style="left:377px;top:329px;font-weight:bold;font-size:12px;letter-spacing:.6px">516</div>
<div class="abs" style="left:2px;top:352px;width:473px;height:1px;background:#e0e0e0"></div>
<!-- group boxes -->
<div class="gb" style="left:4px;top:364px;width:187px;height:38px"></div>
<div class="d" style="left:9px;top:356px;background:#f0f0f0;padding:0 2px;color:#a8a8a8">Inizio</div>
<div class="abs" style="left:9px;top:375px;width:99px;height:20px;background:#cfcfcf;border:1px solid #c4c4c4"></div>
<div class="d" style="left:13px;top:378px;color:#7d7d7d">Lato</div>
<svg width="12" height="8" viewBox="0 0 12 8" style="left:92px;top:382px"><path d="M1.500 1.500l4.500 4.500 4.500-4.500" fill="none" stroke="#a8a8a8" stroke-width="1.100"/></svg>
<div class="ind" style="left:113px;top:375px;width:67px"></div><div class="d" style="left:117px;top:378px;color:#8a8a8a">0</div>
<div class="gb" style="left:196px;top:364px;width:188px;height:38px"></div>
<div class="d" style="left:201px;top:356px;background:#f0f0f0;padding:0 2px;color:#a8a8a8">Fine</div>
<div class="abs" style="left:201px;top:375px;width:99px;height:20px;background:#cfcfcf;border:1px solid #c4c4c4"></div>
<div class="d" style="left:205px;top:378px;color:#7d7d7d">Lato</div>
<svg width="12" height="8" viewBox="0 0 12 8" style="left:284px;top:382px"><path d="M1.500 1.500l4.500 4.500 4.500-4.500" fill="none" stroke="#a8a8a8" stroke-width="1.100"/></svg>
<div class="ind" style="left:305px;top:375px;width:66px"></div><div class="d" style="left:309px;top:378px;color:#8a8a8a">0</div>
<div class="gb" style="left:391px;top:361px;width:82px;height:206px"></div>
<div class="d" style="left:398px;top:354px;background:#f0f0f0;padding:0 2px">Margini</div>
<div class="gb" style="left:5px;top:407px;width:379px;height:160px"></div>
<div class="abs" style="left:10px;top:413px;width:148px;height:21px;background:#e3e3e3;border:1px solid #adadad"></div>
<div class="d" style="left:14px;top:417px">Tangente a Utensile</div>
<svg width="12" height="8" viewBox="0 0 12 8" style="left:142px;top:421px"><path d="M1.500 1.500l4.500 4.500 4.500-4.500" fill="none" stroke="#333" stroke-width="1.100"/></svg>
<div class="d" style="left:14px;top:441px">Offset X</div><div class="in" style="left:79px;top:438px;width:79px"></div><div class="d" style="left:82px;top:441px">0</div>
<div class="d" style="left:14px;top:463px">Offset Z</div><div class="in" style="left:79px;top:460px;width:79px"></div><div class="d" style="left:82px;top:463px">0</div>
<div class="d" style="left:14px;top:485px">Angolo</div><div class="in" style="left:79px;top:482px;width:79px"></div><div class="d" style="left:82px;top:485px">0</div>
<div class="d" style="left:11px;top:507px">Angoli Acuti</div>
<div class="abs" style="left:144px;top:508px;width:13px;height:13px;background:#fff;border:1px solid #333"></div>
<svg width="13" height="13" viewBox="0 0 13 13" style="left:144px;top:508px"><path d="M2.500 6.500l3 3 5.500-6.500" fill="none" stroke="#222" stroke-width="1.200"/></svg>
<div class="d" style="left:11px;top:528px;color:#8a8a8a">Crea Scavi Singoli</div>
<div class="abs" style="left:144px;top:529px;width:13px;height:13px;background:#fff;border:1px solid #d0d0d0"></div>
<!-- photo -->
<svg width="216" height="129" viewBox="-.5 -.5 216 129" style="left:164px;top:424px">
 <defs>
 <linearGradient id="w1" x1="0" y1="0" x2="1" y2="1"><stop offset="0" stop-color="#c96019"/><stop offset=".5" stop-color="#c45c18"/><stop offset="1" stop-color="#b45012"/></linearGradient>
 <linearGradient id="w2" x1="0" y1="0" x2="1" y2="1"><stop offset="0" stop-color="#b8540f"/><stop offset="1" stop-color="#9a420a"/></linearGradient>
 <linearGradient id="w3" x1="0" y1="1" x2="1" y2="0"><stop offset="0" stop-color="#d67420"/><stop offset=".5" stop-color="#e8943f"/><stop offset="1" stop-color="#d87a28"/></linearGradient>
 <linearGradient id="ct" x1="0" y1="0" x2="0" y2="1"><stop offset="0" stop-color="#5b473f"/><stop offset="1" stop-color="#46362f"/></linearGradient>
 <radialGradient id="hole" cx=".5" cy=".62" r=".6"><stop offset="0" stop-color="#15100e"/><stop offset=".6" stop-color="#3a2a24"/><stop offset="1" stop-color="#7a6154"/></radialGradient>
 <clipPath id="pc"><rect x="0" y="0" width="215" height="127"/></clipPath>
 </defs>
 <rect x="0" y="0" width="215" height="127" fill="#fff"/>
 <g clip-path="url(#pc)">
 <!-- flat top -->
 <path d="M0 0h215v40l-30 8-45 28-27 51h-68l-45-59z" fill="url(#w1)"/>
 <!-- grain -->
 <path d="M4 32l150-30M2 50l200-48M22 72l160-56M40 86l120-44" stroke="#9c4a10" stroke-width="1.100" opacity=".55" fill="none"/>
 <path d="M0 14l90-14M60 60l120-42" stroke="#dc8236" stroke-width="1" opacity=".45" fill="none"/>
 <!-- side face -->
 <path d="M0 44l4 1 50 73-9 10-45-60z" fill="url(#w2)"/>
 <!-- profile band -->
 <path d="M215 8q-30 8-52 20t-38 22l-40 22-31 46 6 9 52-32 28-20q30-24 75-37z" fill="url(#w3)"/>
 <path d="M85 72q22-8 40-22t38-22 52-20" fill="none" stroke="#b25a18" stroke-width="1.300" opacity=".8"/>
 <path d="M100 80q24-12 42-26t42-20" fill="none" stroke="#f0a456" stroke-width="2" opacity=".6"/>
 <!-- lower step -->
 <path d="M48 116l55-30 10 6v36h-54z" fill="#c66c1e"/>
 <path d="M48 116l55-30" stroke="#7a3408" stroke-width="1.600" fill="none"/>
 <path d="M54 118l6 9" stroke="#8a3c0c" stroke-width="1"/>
 <!-- right wood bits -->
 <path d="M175 34l40-14v22l-16 6z" fill="#dc8434"/><path d="M199 48l16-6v10z" fill="#fff"/>
 <path d="M160 42l25-8 10 6-30 12z" fill="#2a1c14" opacity=".8"/>
 <!-- knives -->
 <path d="M85.500 72l24 4 1.500 11-16-6z" fill="#d9d5cc"/><path d="M85.500 72l24 4" stroke="#f4f2ee" stroke-width="1"/><path d="M95 91l15-2v7l-13-1z" fill="#e3dfd6"/>
 <!-- cutter -->
 <path d="M141 50q0-3.500 4-3.500l55-.5 15 9v73h-103l-2-51 31 5z" fill="url(#ct)"/>
 <path d="M110 77l31 5 0-32" fill="none" stroke="#2e221d" stroke-width="1.200"/>
 <path d="M112 128l-2-51q10 8 32 10 36 4 73-12v53z" fill="#4b3a33"/>
 <path d="M112 106q30 14 60 12t43-10" fill="none" stroke="#8f7060" stroke-width="2.400" opacity=".85"/>
 <ellipse cx="178" cy="73" rx="27" ry="15.500" fill="#634d43"/><ellipse cx="178" cy="73" rx="22" ry="12" fill="url(#hole)"/>
 <path d="M156 73q4-11 22-12t22 11" fill="none" stroke="#8a6f62" stroke-width="1.400" opacity=".7"/>
 <path d="M206 76l9-3v12l-7 3z" fill="#cfc9c2"/>
 </g>
 <rect x="0" y="0" width="215" height="127" fill="none" stroke="#000" stroke-width="1"/>
</svg>
<!-- tab strip -->
<div class="abs" style="left:0;top:569px;width:477px;height:2px;background:#fff;border-top:1px solid #a5a5a5"></div>
<div class="abs" style="left:1px;top:570px;width:72px;height:23px;background:#f0f0f0;border:1px solid #8f8f8f;border-top:none;border-left:none;box-shadow:1px 1px 0 #696969"></div>
<div class="d" style="left:8px;top:574px">Parameters</div>
<div class="abs" style="left:0;top:596px;width:477px;height:1px;background:#dadada"></div>
<svg width="14" height="14" viewBox="0 0 14 14" style="left:461px;top:603px"><g fill="#9a9a9a"><rect x="10" y="2" width="2" height="2"/><rect x="6" y="6" width="2" height="2"/><rect x="10" y="6" width="2" height="2"/><rect x="2" y="10" width="2" height="2"/><rect x="6" y="10" width="2" height="2"/><rect x="10" y="10" width="2" height="2"/></g></svg>
</div>
<div id="right">
<style>
#right .lb{position:absolute;white-space:nowrap;text-align:center;font-size:11.600px;line-height:15px;color:#111;transform:translateX(-50%)}
#right .bt{position:absolute;top:190px;height:18px;width:50px;background:#e3e3e3;border:1px solid #b2b2b2}
#right .bl{position:absolute;top:192px;white-space:nowrap;font-size:11px;line-height:14px;color:#000}
</style>
<div class="abs" style="left:1382px;top:163px;width:216px;height:714px;background:#f0f0f0"></div>
<div class="abs" style="left:1385px;top:164px;width:212px;height:24px;background:#e7e7e7"></div>
<div class="t" style="left:1390px;top:168px;font-size:11.600px;color:#444;line-height:16px">Oikema Eng</div>
<svg width="60" height="20" viewBox="0 0 60 20" style="left:1538px;top:166px"><path d="M6.500 8h8l-4 5z" fill="#666"/><path d="M27 4.500h5M28 4.500v6M31 4.500v6M26 10.500h7M29.500 10.500v4.500" stroke="#555" stroke-width="1.200" fill="none"/><path d="M45 6.500l6.500 6.500M51.500 6.500l-6.500 6.500" stroke="#555" stroke-width="1.400"/></svg>
<div class="bt" style="left:1387px"></div><div class="bt" style="left:1439px"></div><div class="bt" style="left:1491px"></div><div class="bt" style="left:1543px"></div>
<div class="abs" style="left:1594px;top:190px;width:3px;height:18px;background:#7a7a7a"></div>
<svg width="212" height="20" viewBox="1386 189 212 20" style="left:1386px;top:189px">
 <rect x="1394.500" y="192.500" width="10" height="12" fill="#fff" stroke="#555"/><path d="M1397 195.500h2M1401 195.500h2M1397 198.500h2M1401 198.500h2M1397 201.500h2M1401 201.500h2" stroke="#777" stroke-width="1.400"/>
 <path d="M1445.500 193l5 1.500v10l-5-1.500z" fill="#e8e8e0" stroke="#8a8a80"/><path d="M1450.500 194.500l5-1.500v10l-5 1.500" fill="#f8f8f0" stroke="#8a8a80"/><path d="M1457.500 196v6l-1.500-1.500m1.500 1.500l1.500-1.500" stroke="#a8a890" fill="none"/>
 <rect x="1498.500" y="197.500" width="9" height="8" fill="#5f6b2a" stroke="#3a431a"/><rect x="1500.500" y="198" width="5" height="3" fill="#e8ead8"/><path d="M1502.500 196v-3h8v8h-2" fill="none" stroke="#777"/>
 <path d="M1549.500 192.500h9v10h-9z" fill="#e6e6e6" stroke="#999"/><path d="M1558.500 194l2.500 1v7l-1.500 1.500" fill="none" stroke="#aab08a"/>
</svg>
<div class="bl" style="left:1411px">Nu...</div><div class="bl" style="left:1465px">Apri</div><div class="bl" style="left:1513px">Salva</div><div class="bl" style="left:1565px">Chi...</div>
<div class="abs" style="left:1387px;top:209px;width:209px;height:19px;background:#fff"></div>
<div class="abs" style="left:1387px;top:210px;width:18px;height:18px;background:#eaeaea;border:1px solid #c9c9c9"></div>
<svg width="18" height="18" viewBox="0 0 18 18" style="left:1387px;top:210px"><path d="M2.500 9l6-5v3h7v4h-7v3z" fill="#b9b9b9"/></svg>
<div class="t" style="left:1409px;top:210px;font-size:11.600px;color:#555;line-height:16px">Cerca ...</div>
<div class="abs" style="left:1578px;top:210px;width:18px;height:18px;background:#eaeaea;border:1px solid #c0c0c0"></div>
<svg width="18" height="18" viewBox="0 0 18 18" style="left:1578px;top:210px"><path d="M3.500 3.500l11 11.500M14.500 3.500l-11 11.500" stroke="#e8402c" stroke-width="1.900"/></svg>
<div class="abs" style="left:1386px;top:229px;width:211px;height:624px;background:#fff;border:1px solid #8f8f8f"></div>
<div class="abs" style="left:1579px;top:230px;width:17px;height:622px;background:#f0f0f0"></div>
<div class="abs" style="left:1579px;top:415px;width:17px;height:190px;background:#cdcdcd"></div>
<svg width="17" height="622" viewBox="0 0 17 622" style="left:1579px;top:230px"><path d="M4.500 12l4-4 4 4M4.500 610l4 4 4-4" fill="none" stroke="#505050" stroke-width="1.800"/></svg>

<svg width="193" height="622" viewBox="1387 230 193 622" style="left:1387px;top:230px;overflow:hidden" stroke-linejoin="round">
<defs>
<linearGradient id="stl" x1="0" y1="0" x2="1" y2="0"><stop offset="0" stop-color="#8a8a8a"/><stop offset=".45" stop-color="#f6f6f6"/><stop offset="1" stop-color="#7a7a7a"/></linearGradient>
<linearGradient id="redg" x1="0" y1="0" x2="1" y2="1"><stop offset="0" stop-color="#f0482a"/><stop offset=".5" stop-color="#d8281a"/><stop offset="1" stop-color="#8a1208"/></linearGradient>
<linearGradient id="grayg" x1="0" y1="0" x2="1" y2="1"><stop offset="0" stop-color="#f2f2f2"/><stop offset=".5" stop-color="#c9c9c9"/><stop offset="1" stop-color="#8f8f8f"/></linearGradient>
<linearGradient id="grn" x1="0" y1="0" x2="0" y2="1"><stop offset="0" stop-color="#c4e23a"/><stop offset="1" stop-color="#7fb512"/></linearGradient>
</defs>
<path d="M1412 273l31-16 16 9-29 14z" fill="#dc9560" stroke="#7a3e1a" stroke-width=".9"/><path d="M1412 273l18 7v6l-18-7z" fill="#c8783f" stroke="#7a3e1a" stroke-width=".9"/><path d="M1430 280l29-14v6l-29 14z" fill="#b9662f" stroke="#7a3e1a" stroke-width=".9"/><ellipse cx="1430" cy="277.5" rx="2.200" ry="1.200" fill="#e8ad7c" stroke="#7a3e1a" stroke-width=".7"/>
<path d="M1423 238h16l-.8 4h-14.400z" fill="#c8202a"/><path d="M1423.8 242h14.400l-1.600 13h-11.200z" fill="url(#stl)"/><path d="M1424 243.5h14M1424.5 249.5h13" stroke="#1c1c1c" stroke-width="2.200"/><path d="M1424.3 246.5h13.400" stroke="#555" stroke-width="1.400"/><path d="M1425.4 252.5h11.200" stroke="#333" stroke-width="2"/><path d="M1425.4 255h11.200l-3.800 8h-3.600z" fill="#a9b7c2" stroke="#6d7a86" stroke-width=".6"/><path d="M1431 263v12" stroke="#9aa4ad" stroke-width="2"/><path d="M1431 263v12" stroke="#e8ecef" stroke-width=".8"/>
<path d="M1503 273l31-16 16 9-29 14z" fill="#dc9560" stroke="#7a3e1a" stroke-width=".9"/><path d="M1503 273l18 7v6l-18-7z" fill="#c8783f" stroke="#7a3e1a" stroke-width=".9"/><path d="M1521 280l29-14v6l-29 14z" fill="#b9662f" stroke="#7a3e1a" stroke-width=".9"/><ellipse cx="1513" cy="271" rx="2.200" ry="1.200" fill="#e8ad7c" stroke="#7a3e1a" stroke-width=".7"/><ellipse cx="1521" cy="276" rx="2.200" ry="1.200" fill="#e8ad7c" stroke="#7a3e1a" stroke-width=".7"/><ellipse cx="1533" cy="263" rx="2.200" ry="1.200" fill="#e8ad7c" stroke="#7a3e1a" stroke-width=".7"/><ellipse cx="1541" cy="268" rx="2.200" ry="1.200" fill="#e8ad7c" stroke="#7a3e1a" stroke-width=".7"/>
<path d="M1514 238h16l-.8 4h-14.400z" fill="#c8202a"/><path d="M1514.8 242h14.400l-1.600 13h-11.200z" fill="url(#stl)"/><path d="M1515 243.5h14M1515.5 249.5h13" stroke="#1c1c1c" stroke-width="2.200"/><path d="M1515.3 246.5h13.400" stroke="#555" stroke-width="1.400"/><path d="M1516.4 252.5h11.200" stroke="#333" stroke-width="2"/><path d="M1516.4 255h11.200l-3.800 8h-3.600z" fill="#a9b7c2" stroke="#6d7a86" stroke-width=".6"/><path d="M1522 263v12" stroke="#9aa4ad" stroke-width="2"/><path d="M1522 263v12" stroke="#e8ecef" stroke-width=".8"/>
<g transform="translate(0 0)"><ellipse cx="1426" cy="373" rx="13" ry="2.200" fill="#000" opacity=".10"/><path d="M1416 341Q1422 333 1434 337.500L1438 340.500L1436 349L1430 350Q1428 354 1429 360L1430 371.500Q1423 375 1417 372L1416 358Q1413.500 348 1416 341Z" fill="url(#redg)"/><path d="M1418.500 352L1427 350L1428 362L1419.500 364Z" fill="#1c1c1c" opacity=".8"/><path d="M1417.500 341Q1423 335.500 1433 339" fill="none" stroke="#fff" stroke-width="1.300" opacity=".55"/><path d="M1436 339L1450 344.500L1449 351L1435 349Z" fill="url(#stl)"/><path d="M1449 346L1454 348.500L1453.500 351L1449 350.500Z" fill="#7d858c"/><path d="M1454 349.700L1459 351.500" stroke="#9aa4ad" stroke-width="1.400"/><path d="M1439 340.500l-1.500 8.800M1443 342l-1.200 8" stroke="#6a6f75" stroke-width=".9" opacity=".8"/></g>
<g transform="translate(91 0)"><ellipse cx="1426" cy="373" rx="13" ry="2.200" fill="#000" opacity=".10"/><path d="M1416 341Q1422 333 1434 337.500L1438 340.500L1436 349L1430 350Q1428 354 1429 360L1430 371.500Q1423 375 1417 372L1416 358Q1413.500 348 1416 341Z" fill="url(#grayg)"/><path d="M1418.500 352L1427 350L1428 362L1419.500 364Z" fill="#8a8a8a" opacity=".8"/><path d="M1417.500 341Q1423 335.500 1433 339" fill="none" stroke="#fff" stroke-width="1.300" opacity=".55"/><path d="M1436 339L1450 344.500L1449 351L1435 349Z" fill="url(#stl)"/><path d="M1449 346L1454 348.500L1453.500 351L1449 350.500Z" fill="#7d858c"/><path d="M1454 349.700L1459 351.500" stroke="#9aa4ad" stroke-width="1.400"/><path d="M1439 340.500l-1.500 8.800M1443 342l-1.200 8" stroke="#6a6f75" stroke-width=".9" opacity=".8"/></g>
<path d="M1528.500 352l5.500-4.500 6.500 7 7.500-7 5 5.500-7.500 6.500 7 7-5.500 4.500-6.500-6.500-7 7-5-5 7-7z" fill="#e85a4a" stroke="#c8382a" stroke-width=".8"/>
<path d="M1412 455l31-16 16 9-29 14z" fill="#dc9560" stroke="#7a3e1a" stroke-width=".9"/><path d="M1412 455l18 7v6l-18-7z" fill="#c8783f" stroke="#7a3e1a" stroke-width=".9"/><path d="M1430 462l29-14v6l-29 14z" fill="#b9662f" stroke="#7a3e1a" stroke-width=".9"/>
<path d="M1430 462l29-14" stroke="#7a3e1a" stroke-width=".8"/><path d="M1417 452.500l26 10" stroke="#9a5a2c" stroke-width=".7" opacity=".7"/>
<path d="M1434 421h20l-1 4.500h-18z" fill="#c8202a"/><path d="M1435 425.500h18l-2 13h-14z" fill="#222"/><path d="M1435.500 428h17" stroke="#ddd" stroke-width="1.200"/><path d="M1436 432h16" stroke="#777" stroke-width="1.400"/><path d="M1439.500 438.500h9l.5 14-4 7.500-5-4z" fill="url(#stl)" stroke="#777" stroke-width=".7"/><path d="M1444 439v20" stroke="#fff" stroke-width="1.400" opacity=".8"/>
<path d="M1503 455l31-16 16 9-29 14z" fill="#dc9560" stroke="#7a3e1a" stroke-width=".9"/><path d="M1503 455l18 7v6l-18-7z" fill="#c8783f" stroke="#7a3e1a" stroke-width=".9"/><path d="M1521 462l29-14v6l-29 14z" fill="#b9662f" stroke="#7a3e1a" stroke-width=".9"/>
<path d="M1514 459.500l29-15M1517 460.500l29-15" stroke="#7a3e1a" stroke-width=".8"/><path d="M1514 459.500v6M1517 460.500v6" stroke="#7a3e1a" stroke-width=".7"/>
<path d="M1545.8 439.0 L1545.7 440.8 L1543.3 441.8 L1542.8 443.1 L1543.9 445.8 L1542.9 447.1 L1540.5 446.3 L1539.5 447.0 L1539.0 449.9 L1537.5 450.4 L1536.0 448.0 L1534.8 447.9 L1533.0 449.9 L1531.6 449.2 L1531.5 446.3 L1530.6 445.3 L1528.1 445.8 L1527.3 444.2 L1528.7 441.8 L1528.5 440.4 L1526.2 439.0 L1526.3 437.2 L1528.7 436.2 L1529.2 434.9 L1528.1 432.2 L1529.1 430.9 L1531.5 431.7 L1532.5 431.0 L1533.0 428.1 L1534.5 427.6 L1536.0 430.0 L1537.2 430.1 L1539.0 428.1 L1540.4 428.8 L1540.5 431.7 L1541.4 432.7 L1543.9 432.2 L1544.7 433.8 L1543.3 436.2 L1543.5 437.6Z" fill="#c9c9c9" stroke="#8a8a8a" stroke-width=".9"/><ellipse cx="1536" cy="439" rx="5.75" ry="7.13" fill="#e4e4e4" stroke="#9a9a9a" stroke-width=".6"/><ellipse cx="1536" cy="439" rx="2" ry="2.600" fill="#fff" stroke="#888" stroke-width=".7"/>
<path d="M1412 546l31-16 16 9-29 14z" fill="#dc9560" stroke="#7a3e1a" stroke-width=".9"/><path d="M1412 546l18 7v6l-18-7z" fill="#c8783f" stroke="#7a3e1a" stroke-width=".9"/><path d="M1430 553l29-14v6l-29 14z" fill="#b9662f" stroke="#7a3e1a" stroke-width=".9"/>
<path d="M1416 547.5l29-15" stroke="#7a3e1a" stroke-width=".8"/>
<path d="M1420 549.0l29-15" stroke="#7a3e1a" stroke-width=".8"/>
<path d="M1424 550.5l29-15" stroke="#7a3e1a" stroke-width=".8"/>
<path d="M1428 552.0l29-15" stroke="#7a3e1a" stroke-width=".8"/>
<path d="M1444.3 529.0 L1444.2 530.7 L1441.9 531.7 L1441.5 532.9 L1442.6 535.5 L1441.6 536.8 L1439.3 535.9 L1438.3 536.6 L1437.9 539.5 L1436.5 539.9 L1435.0 537.6 L1433.9 537.5 L1432.1 539.5 L1430.8 538.8 L1430.7 535.9 L1429.8 535.1 L1427.4 535.5 L1426.7 534.0 L1428.1 531.7 L1427.8 530.3 L1425.7 529.0 L1425.8 527.3 L1428.1 526.3 L1428.5 525.1 L1427.4 522.5 L1428.4 521.2 L1430.7 522.1 L1431.7 521.4 L1432.1 518.5 L1433.5 518.1 L1435.0 520.4 L1436.1 520.5 L1437.9 518.5 L1439.2 519.2 L1439.3 522.1 L1440.2 522.9 L1442.6 522.5 L1443.3 524.0 L1441.9 526.3 L1442.2 527.7Z" fill="#c9c9c9" stroke="#8a8a8a" stroke-width=".9"/><ellipse cx="1435" cy="529" rx="5.5" ry="6.82" fill="#e4e4e4" stroke="#9a9a9a" stroke-width=".6"/><ellipse cx="1435" cy="529" rx="2" ry="2.600" fill="#fff" stroke="#888" stroke-width=".7"/>
<path d="M1438.2 532.0 L1438.1 533.9 L1435.6 534.9 L1435.1 536.2 L1436.3 539.1 L1435.2 540.5 L1432.7 539.6 L1431.6 540.3 L1431.2 543.4 L1429.6 543.9 L1428.0 541.4 L1426.8 541.2 L1424.8 543.4 L1423.4 542.7 L1423.3 539.6 L1422.4 538.6 L1419.7 539.1 L1418.9 537.4 L1420.4 534.9 L1420.1 533.5 L1417.8 532.0 L1417.9 530.1 L1420.4 529.1 L1420.9 527.8 L1419.7 524.9 L1420.8 523.5 L1423.3 524.4 L1424.4 523.7 L1424.8 520.6 L1426.4 520.1 L1428.0 522.6 L1429.2 522.8 L1431.2 520.6 L1432.6 521.3 L1432.7 524.4 L1433.6 525.4 L1436.3 524.9 L1437.1 526.6 L1435.6 529.1 L1435.9 530.5Z" fill="#c9c9c9" stroke="#8a8a8a" stroke-width=".9"/><ellipse cx="1428" cy="532" rx="6.0" ry="7.4399999999999995" fill="#e4e4e4" stroke="#9a9a9a" stroke-width=".6"/><ellipse cx="1428" cy="532" rx="2" ry="2.600" fill="#fff" stroke="#888" stroke-width=".7"/>
<path d="M1506.500 520l7-6h26l-7 6z" fill="#7fdde0" stroke="#0e5a66" stroke-width=".9"/><path d="M1532.500 520l7-6v38l-7 6z" fill="#1b98a8" stroke="#0e5a66" stroke-width=".9"/><rect x="1506.500" y="520" width="26" height="38" fill="#2bb9c6" stroke="#0e5a66" stroke-width=".9"/>
<rect x="1510" y="523.0" width="19" height="9" fill="#1a8a98" stroke="#0e5a66" stroke-width=".6"/><rect x="1510" y="528.0" width="19" height="4" fill="#5fd3da"/>
<rect x="1510" y="534.5" width="19" height="9" fill="#1a8a98" stroke="#0e5a66" stroke-width=".6"/><rect x="1510" y="539.5" width="19" height="4" fill="#5fd3da"/>
<rect x="1510" y="546.0" width="19" height="9" fill="#1a8a98" stroke="#0e5a66" stroke-width=".6"/><rect x="1510" y="551.0" width="19" height="4" fill="#5fd3da"/>
<path d="M1520 555l18-20" stroke="#555" stroke-width="3.600" stroke-linecap="round"/><path d="M1520 555l18-20" stroke="#e6e6e6" stroke-width="2" stroke-linecap="round"/>
<path d="M1540 526l1.500 5 5-2.500-3 4.500 5 2-5.500.8 1.500 5-4-3.500-3 4.500v-5.500l-5 .5 4-3.500-3.500-4 5.500 1z" fill="#f7a21a"/><circle cx="1540" cy="534.500" r="2.400" fill="#fff3b0"/>
<path d="M1418 608l5-5h30v38l-5 5h-30z" fill="#e9e6e2" stroke="#cfcac4" stroke-width=".9"/><path d="M1418 608h30v38h-30z" fill="#f3f1ee" stroke="#cfcac4" stroke-width=".9"/><path d="M1421 611h24v32h-24z" fill="#e2dedb" stroke="#cfcac4" stroke-width=".7"/><path d="M1448 608l5-5" stroke="#cfcac4" stroke-width=".9"/>
<path d="M1420 629l4-4 3-1v18l-3 2-4 3z" fill="#2bb9c6" stroke="#0e5a66" stroke-width=".8"/><path d="M1424 625v19" stroke="#0e5a66" stroke-width=".7"/>
<path d="M1429 629l4-4 3-1v18l-3 2-4 3z" fill="#2bb9c6" stroke="#0e5a66" stroke-width=".8"/><path d="M1433 625v19" stroke="#0e5a66" stroke-width=".7"/>
<path d="M1438 629l4-4 3-1v18l-3 2-4 3z" fill="#2bb9c6" stroke="#0e5a66" stroke-width=".8"/><path d="M1442 625v19" stroke="#0e5a66" stroke-width=".7"/>
<path d="M1509 608l5-5h30v38l-5 5h-30z" fill="#e9e6e2" stroke="#cfcac4" stroke-width=".9"/><path d="M1509 608h30v38h-30z" fill="#f3f1ee" stroke="#cfcac4" stroke-width=".9"/><path d="M1512 611h24v32h-24z" fill="#e2dedb" stroke="#cfcac4" stroke-width=".7"/><path d="M1539 608l5-5" stroke="#cfcac4" stroke-width=".9"/>
<path d="M1512 623l5-6h22l-3 6z" fill="#4fd0d8" stroke="#0e5a66" stroke-width=".8"/><path d="M1512 623h24v2.500h-24z" fill="#1d9dab" stroke="#0e5a66" stroke-width=".7"/><path d="M1521 625.500h4v20l-4 1z" fill="#2bb9c6" stroke="#0e5a66" stroke-width=".7"/><path d="M1525 625.500h3.500v17l-3.500 3z" fill="#1b8d9c" stroke="#0e5a66" stroke-width=".7"/>
<path d="M1418 699l5-5h30v38l-5 5h-30z" fill="#e9e6e2" stroke="#cfcac4" stroke-width=".9"/><path d="M1418 699h30v38h-30z" fill="#f3f1ee" stroke="#cfcac4" stroke-width=".9"/><path d="M1421 702h24v32h-24z" fill="#e2dedb" stroke="#cfcac4" stroke-width=".7"/><path d="M1448 699l5-5" stroke="#cfcac4" stroke-width=".9"/>
<path d="M1419.500 713l2-2h24l-2 2z" fill="#6fdbe0" stroke="#0e5a66" stroke-width=".7"/><rect x="1419.500" y="713" width="24" height="7" fill="#2bb9c6" stroke="#0e5a66" stroke-width=".8"/><path d="M1443.500 713l2-2v7l-2 2z" fill="#15808e" stroke="#0e5a66" stroke-width=".7"/><path d="M1429 716h4" stroke="#0e5a66" stroke-width=".8"/>
<path d="M1419.500 722l2-2h24l-2 2z" fill="#6fdbe0" stroke="#0e5a66" stroke-width=".7"/><rect x="1419.500" y="722" width="24" height="7" fill="#2bb9c6" stroke="#0e5a66" stroke-width=".8"/><path d="M1443.500 722l2-2v7l-2 2z" fill="#15808e" stroke="#0e5a66" stroke-width=".7"/><path d="M1429 725h4" stroke="#0e5a66" stroke-width=".8"/>
<path d="M1419.500 731l2-2h24l-2 2z" fill="#6fdbe0" stroke="#0e5a66" stroke-width=".7"/><rect x="1419.500" y="731" width="24" height="7" fill="#2bb9c6" stroke="#0e5a66" stroke-width=".8"/><path d="M1443.500 731l2-2v7l-2 2z" fill="#15808e" stroke="#0e5a66" stroke-width=".7"/><path d="M1429 734h4" stroke="#0e5a66" stroke-width=".8"/>
<path d="M1509 699l5-5h30v38l-5 5h-30z" fill="#e9e6e2" stroke="#cfcac4" stroke-width=".9"/><path d="M1509 699h30v38h-30z" fill="#f3f1ee" stroke="#cfcac4" stroke-width=".9"/><path d="M1512 702h24v32h-24z" fill="#e2dedb" stroke="#cfcac4" stroke-width=".7"/><path d="M1539 699l5-5" stroke="#cfcac4" stroke-width=".9"/>
<rect x="1510.5" y="704" width="11.5" height="12" fill="#2bb9c6" stroke="#0e4450" stroke-width="1.100"/>
<rect x="1523.5" y="704" width="11.5" height="12" fill="#2bb9c6" stroke="#0e4450" stroke-width="1.100"/>
<rect x="1510.5" y="718" width="11.5" height="21" fill="#2bb9c6" stroke="#0e4450" stroke-width="1.100"/>
<rect x="1523.5" y="718" width="11.5" height="21" fill="#2bb9c6" stroke="#0e4450" stroke-width="1.100"/>
<path d="M1510.500 704l2-2h24l-1.500 2zM1535 704l1.500-2v36l-1.500 1z" fill="#15808e" stroke="#0e4450" stroke-width=".8"/>
<path d="M1413.500 799l3-3h17l-1 3z" fill="#5fd3da" stroke="#0e4450" stroke-width=".8"/><rect x="1413.500" y="799" width="19" height="28" fill="#2bb9c6" stroke="#0e4450" stroke-width="1"/>
<rect x="1433" y="799" width="6" height="27" fill="#fff"/>
<path d="M1439.500 799l3-3h16v28l-3 3h-16z" fill="#1b98a8" stroke="#0e4450" stroke-width=".9"/><rect x="1439.500" y="799" width="16" height="28" fill="#2bb9c6" stroke="#0e4450" stroke-width="1"/><rect x="1442.500" y="802" width="10.500" height="20" fill="#a8dff0" stroke="#0e4450" stroke-width=".7"/>
<path d="M1423 796q8-7 20-4v-4.500l8 7.500-8 7v-4.500q-10-2-14 1z" fill="url(#grn)" stroke="#6c9a10" stroke-width=".8"/>
<path d="M1442 830q-8 2-16 0v4l-8-7 8-7v4q8 2 16 0z" fill="url(#grn)" stroke="#6c9a10" stroke-width=".8"/>
<path d="M1511.500 790l2-3h29l-1 3z" fill="#5fd3da" stroke="#0e4450" stroke-width=".8"/><path d="M1541 790l1.500-3v41l-1.500 3z" fill="#15808e" stroke="#0e4450" stroke-width=".8"/><rect x="1511.500" y="790" width="29.500" height="41" fill="#2bb9c6" stroke="#0e4450" stroke-width="1.100"/>
<path d="M1517 825v-25q1-2 4.500-3t5-2.500q1.500 1.500 5 2.500t4.500 3v25z" fill="#2bb9c6" stroke="#0e4450" stroke-width=".9"/>
</svg>
<div class="lb" style="left:1436px;top:290px">Foro Singolo</div>
<div class="lb" style="left:1527px;top:290px">Fori Multipli</div>
<div class="lb" style="left:1436px;top:381px">Applica Forature</div>
<div class="lb" style="left:1527px;top:381px">Rimuovi<br>Forature</div>
<div class="lb" style="left:1436px;top:472px">Crea<br>Sagomatura</div>
<div class="lb" style="left:1527px;top:472px">Crea Scavo</div>
<div class="lb" style="left:1436px;top:563px">Scavo Multiplo</div>
<div class="lb" style="left:1527px;top:563px">Crea Cabinet</div>
<div class="lb" style="left:1436px;top:654px">Crea Divisioni</div>
<div class="lb" style="left:1526px;top:654px">Crea Pannello</div>
<div class="lb" style="left:1436px;top:745px">Crea Cassetti</div>
<div class="lb" style="left:1527px;top:745px">Crea Antine</div>
<div class="lb" style="left:1436px;top:836px">Sostituisci</div>
<div class="lb" style="left:1526px;top:836px">Cornici su</div>
<div class="abs" style="left:1386px;top:853px;width:75px;height:21px;background:#fff;border:1px solid #b9b9b9;border-top:none"></div>
<div class="t" style="left:1392px;top:855px;font-size:11.600px;color:#444;line-height:16px">Oikema Eng</div>
<div class="t" style="left:1469px;top:856px;font-size:11.600px;color:#444;line-height:16px">Colors</div>
<div class="t" style="left:1516px;top:856px;font-size:11.600px;color:#444;line-height:16px">ICM Mech</div>
<svg width="14" height="14" viewBox="0 0 14 14" style="left:1581px;top:857px"><path d="M2.500 3.500h8M2.500 6h8" stroke="#666" stroke-width="1.300"/><path d="M3 8.500h7l-3.500 3.500z" fill="#666"/></svg>
</div><div id="status" style="position:absolute;left:1px;top:877px;width:1597px;height:21px;background:#fff;border-top:1px solid #dadada">
<style>#status .s{position:absolute;top:4px;white-space:nowrap;font-size:11.600px;line-height:14px;color:#222}</style>
<div class="s" style="left:4px">Per Aiuto, premere F1</div>
<div class="s" style="left:763px;white-space:pre;letter-spacing:0">Dimensioni vista 1171 x  692</div>
<div class="s" style="left:941px;color:#000">Unità</div>
<div class="s" style="left:983px">mm; deg</div>
<div class="abs" style="left:1204px;top:1px;width:24px;height:20px;background:#cdcdcd"></div>
<div class="abs" style="left:1349px;top:1px;width:24px;height:20px;background:#cdcdcd"></div>
<div class="abs" style="left:1397px;top:1px;width:90px;height:20px;background:#fff;border:1px solid #d0d0d0"></div>
<div class="abs" style="left:1487px;top:1px;width:66px;height:20px;background:#fff;border:1px solid #d0d0d0"></div>
<div class="s" style="left:1399px;color:#000;letter-spacing:.25px">Drilldown: Int</div>
<div class="s" style="left:1489px;color:#000">Default</div>
<svg width="690" height="21" viewBox="920 877 690 21" style="left:919px;top:0" stroke-linejoin="round">
 <rect x="927.500" y="880.500" width="6" height="14" fill="#f3c84a" stroke="#b98a1a" stroke-width=".9"/><path d="M928 883.500h2.500M928 886.500h3.500M928 889.500h2.500M928 892h3.500" stroke="#7a5a10" stroke-width=".8"/>
 <circle cx="1051.500" cy="886" r="5" fill="#f4f8fc" stroke="#6a6a6a" stroke-width="1.200"/><path d="M1049.500 883h3l1.500 1.500v4h-4.500z" fill="#fff" stroke="#8a8a8a" stroke-width=".7"/><path d="M1055 890l4.500 5" stroke="#5a5a5a" stroke-width="2"/>
 <circle cx="1076" cy="882" r="2.200" fill="#fff" stroke="#555" stroke-width=".9"/><path d="M1073 885h6l1.500 4 2 1.500-6.500 4.500-6.500-4.500 2-1.500z" fill="#fff" stroke="#555" stroke-width=".9"/>
 <path d="M1104.500 884l3-3h9v9.500l-3 3h-9z" fill="#c9a019" stroke="#5a4a12" stroke-width=".8"/><rect x="1104.500" y="884" width="9" height="9.500" fill="#f7d52e" stroke="#5a4a12" stroke-width=".8"/><path d="M1116 886.500l3 2-3 2z" fill="#444"/>
 <path d="M1138.500 884l3.500-4h11.500v12l-3.500 4h-11.500z" fill="#f2f6fb" stroke="#6a7a90" stroke-width=".8"/><rect x="1138.500" y="884" width="11.500" height="12" fill="#4a90d9" stroke="#1f4f8a" stroke-width=".9"/>
 <circle cx="1180.500" cy="885" r="3.600" fill="#9cc4ec" stroke="#2a5f9e" stroke-width=".9"/><path d="M1174 885h2M1180.500 879v1.500" stroke="#2a5f9e" stroke-width="1"/><rect x="1182.500" y="887.500" width="7" height="7" fill="#333"/><rect x="1184" y="888" width="4" height="2.500" fill="#ddd"/><rect x="1184.500" y="892" width="3" height="2.500" fill="#bbb"/>
 <path d="M1209.500 885.500l4-4.500h10.500l-3 8.500-2.500 4.500h-9z" fill="#c3d5ec" stroke="#3a5f94" stroke-width=".9"/><path d="M1209.500 885.500h9.500v8.500h-9.500z" fill="#8fb0dc" stroke="#3a5f94" stroke-width=".9"/>
 <circle cx="1236" cy="889.500" r="2.800" fill="none" stroke="#7a8a9a" stroke-width="1"/><circle cx="1243" cy="891" r="2.800" fill="none" stroke="#7a8a9a" stroke-width="1"/><path d="M1234 887l2.500-5M1245 888.500l2.500-5.500M1238.800 890h1.500" fill="none" stroke="#7a8a9a" stroke-width="1"/>
 <path d="M1264.500 884l3.500-4h11.500v12l-3.500 4h-11.500z" fill="#2f74c4" stroke="#173f78" stroke-width=".8"/><path d="M1264.500 884l3.500-4h11.500l-3.500 4z" fill="#5a9ae0" stroke="#173f78" stroke-width=".8"/><rect x="1264.500" y="884" width="11.500" height="12" fill="#4a90d9" stroke="#173f78" stroke-width=".9"/>
 <path d="M1298.500 888l3-3v-2l3-2.500h6v6l-1.500 1.500v4l-3 3h-7.500z" fill="#6f95cc" stroke="#2a4a80" stroke-width=".8"/><rect x="1298.500" y="888" width="8" height="7" fill="#9cbbe4" stroke="#2a4a80" stroke-width=".8"/><path d="M1301.500 885h6v3" fill="none" stroke="#2a4a80" stroke-width=".8"/>
 <g fill="#444"><path d="M1092 886h5l-2.500 3z"/><path d="M1127 886h5l-2.500 3z"/><path d="M1161.500 886h5l-2.500 3z"/><path d="M1197 886h5l-2.500 3z"/><path d="M1251.500 886h5l-2.500 3z"/><path d="M1284 886h5l-2.500 3z"/><path d="M1315.500 886h5l-2.500 3z"/></g>
 <path d="M1343.500 887l-5-4.500v2.800h-3.500q-3.500 0-3.500 3.500v3h2.500v-2.500q0-1.500 1.500-1.500h3v3z" fill="#c2c2c2"/><path d="M1341 888.500v7l1.800-1.500 1.200 2.800 1-.5-1.200-2.600h2.200z" fill="#fff" stroke="#bbb" stroke-width=".7"/>
 <path d="M1357.500 881v12l3-2.500 2 4.500 1.800-.8-2-4.500h3.800z" fill="#fff" stroke="#111" stroke-width="1"/>
 <path d="M1386 884.500v8.500l2-1.800 1.400 3 1.100-.5-1.400-3h2.600z" fill="#fff" stroke="#c4c4c4" stroke-width=".8"/>
 <path d="M1479 886h5l-2.500 3z" fill="#666"/><path d="M1544 886h5l-2.500 3z" fill="#666"/>
 <rect x="1562.500" y="880.500" width="6" height="5" fill="#b3143c" stroke="#7a0c28" stroke-width=".8"/><rect x="1558.500" y="889.500" width="5" height="5" fill="#9cc0f0" stroke="#3a6fc0" stroke-width=".8"/><rect x="1567.500" y="889.500" width="5" height="5" fill="#f2f0a0" stroke="#b0a840" stroke-width=".8"/><path d="M1565.500 885.500v2M1561 889.500v-2h9v2" fill="none" stroke="#5a7ab0" stroke-width=".8"/>
 <g fill="#b5b5b5"><rect x="1590" y="885" width="2" height="2"/><rect x="1587" y="888.500" width="2" height="2"/><rect x="1590" y="888.500" width="2" height="2"/><rect x="1584" y="892" width="2" height="2"/><rect x="1587" y="892" width="2" height="2"/><rect x="1590" y="892" width="2" height="2"/></g>
</svg>
</div>
</body></html>
